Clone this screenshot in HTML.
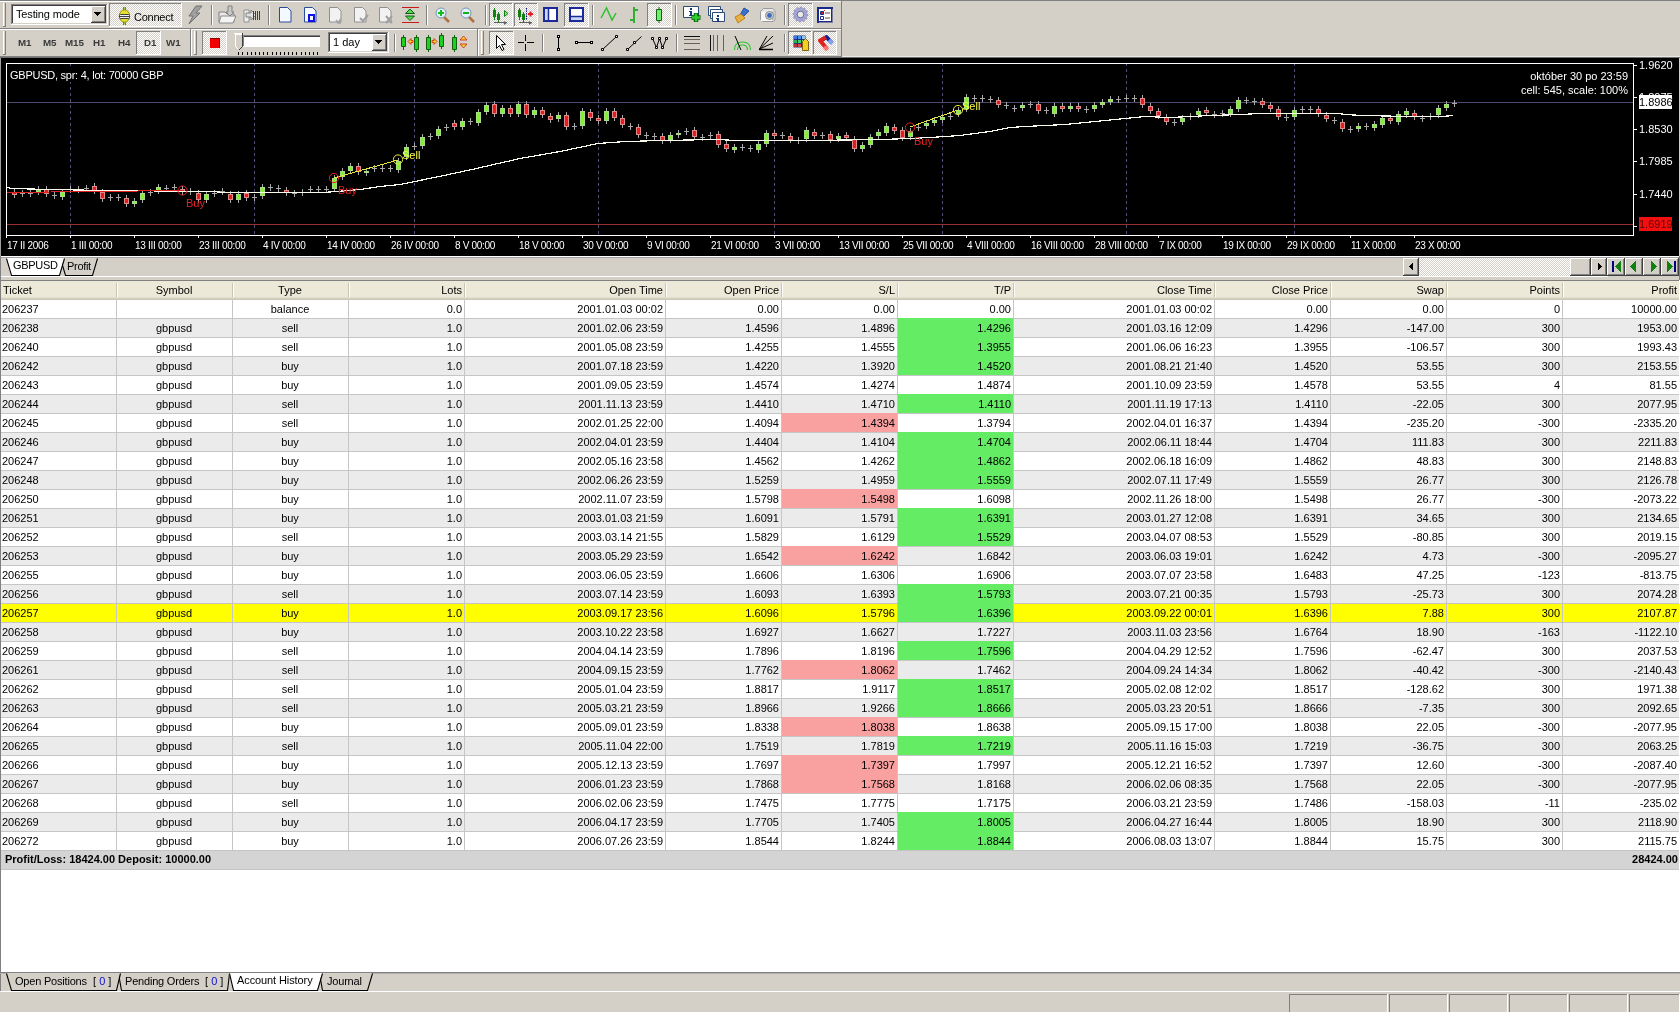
<!DOCTYPE html><html><head><meta charset="utf-8"><style>html,body{margin:0;padding:0;}
body{width:1680px;height:1012px;overflow:hidden;position:relative;background:#d4d0c8;font-family:"Liberation Sans",sans-serif;font-size:11px;color:#000;}
.a{position:absolute;}
.t{position:absolute;white-space:nowrap;line-height:13px;}
svg{position:absolute;overflow:visible;}
</style></head><body><div id="root" style="position:absolute;left:0;top:0;width:1680px;height:1012px;overflow:hidden;will-change:transform"><div class="a" style="left:0px;top:0px;width:1680px;height:1px;background:#808080;"></div><div class="a" style="left:0px;top:1px;width:841px;height:1px;background:#ffffff;"></div><div class="a" style="left:0px;top:28px;width:841px;height:1px;background:#808080;"></div><div class="a" style="left:0px;top:29px;width:841px;height:1px;background:#ffffff;"></div><div class="a" style="left:841px;top:0px;width:1px;height:57px;background:#808080;"></div><div class="a" style="left:0px;top:56px;width:842px;height:1px;background:#808080;"></div><div class="a" style="left:842px;top:56px;width:838px;height:1px;background:#ece9e4;"></div><div class="a" style="left:0px;top:57px;width:1680px;height:1px;background:#707070;"></div><div class="a" style="left:3px;top:3px;width:1px;height:24px;background:#ffffff;"></div><div class="a" style="left:5px;top:3px;width:1px;height:24px;background:#808080;"></div><div class="a" style="left:3px;top:26px;width:3px;height:1px;background:#808080;"></div><div class="a" style="left:11px;top:4px;width:97px;height:21px;background:#ffffff;"></div><div class="a" style="left:11px;top:4px;width:97px;height:1px;background:#808080;"></div><div class="a" style="left:11px;top:4px;width:1px;height:21px;background:#808080;"></div><div class="a" style="left:12px;top:5px;width:95px;height:1px;background:#404040;"></div><div class="a" style="left:12px;top:5px;width:1px;height:19px;background:#404040;"></div><div class="a" style="left:11px;top:24px;width:97px;height:1px;background:#ffffff;"></div><div class="a" style="left:107px;top:4px;width:1px;height:21px;background:#ffffff;"></div><div class="a" style="left:12px;top:23px;width:95px;height:1px;background:#d4d0c8;"></div><div class="a" style="left:106px;top:5px;width:1px;height:19px;background:#d4d0c8;"></div><div class="a" style="left:91px;top:6px;width:15px;height:17px;background:#d4d0c8;"></div><div class="a" style="left:91px;top:6px;width:15px;height:1px;background:#ffffff;"></div><div class="a" style="left:91px;top:6px;width:1px;height:17px;background:#ffffff;"></div><div class="a" style="left:91px;top:22px;width:15px;height:1px;background:#404040;"></div><div class="a" style="left:105px;top:6px;width:1px;height:17px;background:#404040;"></div><div class="a" style="left:92px;top:21px;width:13px;height:1px;background:#808080;"></div><div class="a" style="left:104px;top:7px;width:1px;height:15px;background:#808080;"></div><svg style="left:94px;top:12px" width="8" height="5" shape-rendering="crispEdges"><path d="M0 0H7V1H6V2H5V3H4V4H3V3H2V2H1V1H0Z" fill="#000"/></svg><div class="t" style="left:16px;top:8px;font-size:11px;letter-spacing:-0.15px;">Testing mode</div><div class="a" style="left:109px;top:3px;width:73px;height:24px;background-color:#d4d0c8;background-image:linear-gradient(45deg,#fff 25%,transparent 25%,transparent 75%,#fff 75%),linear-gradient(45deg,#fff 25%,transparent 25%,transparent 75%,#fff 75%);background-size:2px 2px;background-position:0 0,1px 1px;"></div><div class="a" style="left:109px;top:3px;width:73px;height:1px;background:#808080;"></div><div class="a" style="left:109px;top:3px;width:1px;height:24px;background:#808080;"></div><div class="a" style="left:109px;top:26px;width:73px;height:1px;background:#ffffff;"></div><div class="a" style="left:181px;top:3px;width:1px;height:24px;background:#ffffff;"></div><div class="t" style="left:134px;top:11px;letter-spacing:-0.25px;">Connect</div><div class="a" style="left:211px;top:5px;width:1px;height:20px;background:#808080;"></div><div class="a" style="left:212px;top:5px;width:1px;height:20px;background:#ffffff;"></div><div class="a" style="left:268px;top:5px;width:1px;height:20px;background:#808080;"></div><div class="a" style="left:269px;top:5px;width:1px;height:20px;background:#ffffff;"></div><div class="a" style="left:426px;top:5px;width:1px;height:20px;background:#808080;"></div><div class="a" style="left:427px;top:5px;width:1px;height:20px;background:#ffffff;"></div><div class="a" style="left:485px;top:5px;width:1px;height:20px;background:#808080;"></div><div class="a" style="left:486px;top:5px;width:1px;height:20px;background:#ffffff;"></div><div class="a" style="left:592px;top:5px;width:1px;height:20px;background:#808080;"></div><div class="a" style="left:593px;top:5px;width:1px;height:20px;background:#ffffff;"></div><div class="a" style="left:675px;top:5px;width:1px;height:20px;background:#808080;"></div><div class="a" style="left:676px;top:5px;width:1px;height:20px;background:#ffffff;"></div><div class="a" style="left:784px;top:5px;width:1px;height:20px;background:#808080;"></div><div class="a" style="left:785px;top:5px;width:1px;height:20px;background:#ffffff;"></div><div class="a" style="left:489px;top:3px;width:24px;height:24px;background-color:#d4d0c8;background-image:linear-gradient(45deg,#fff 25%,transparent 25%,transparent 75%,#fff 75%),linear-gradient(45deg,#fff 25%,transparent 25%,transparent 75%,#fff 75%);background-size:2px 2px;background-position:0 0,1px 1px;"></div><div class="a" style="left:489px;top:3px;width:24px;height:1px;background:#808080;"></div><div class="a" style="left:489px;top:3px;width:1px;height:24px;background:#808080;"></div><div class="a" style="left:489px;top:26px;width:24px;height:1px;background:#ffffff;"></div><div class="a" style="left:512px;top:3px;width:1px;height:24px;background:#ffffff;"></div><div class="a" style="left:514px;top:3px;width:24px;height:24px;background-color:#d4d0c8;background-image:linear-gradient(45deg,#fff 25%,transparent 25%,transparent 75%,#fff 75%),linear-gradient(45deg,#fff 25%,transparent 25%,transparent 75%,#fff 75%);background-size:2px 2px;background-position:0 0,1px 1px;"></div><div class="a" style="left:514px;top:3px;width:24px;height:1px;background:#808080;"></div><div class="a" style="left:514px;top:3px;width:1px;height:24px;background:#808080;"></div><div class="a" style="left:514px;top:26px;width:24px;height:1px;background:#ffffff;"></div><div class="a" style="left:537px;top:3px;width:1px;height:24px;background:#ffffff;"></div><div class="a" style="left:564px;top:3px;width:25px;height:24px;background-color:#d4d0c8;background-image:linear-gradient(45deg,#fff 25%,transparent 25%,transparent 75%,#fff 75%),linear-gradient(45deg,#fff 25%,transparent 25%,transparent 75%,#fff 75%);background-size:2px 2px;background-position:0 0,1px 1px;"></div><div class="a" style="left:564px;top:3px;width:25px;height:1px;background:#808080;"></div><div class="a" style="left:564px;top:3px;width:1px;height:24px;background:#808080;"></div><div class="a" style="left:564px;top:26px;width:25px;height:1px;background:#ffffff;"></div><div class="a" style="left:588px;top:3px;width:1px;height:24px;background:#ffffff;"></div><div class="a" style="left:647px;top:3px;width:25px;height:24px;background-color:#d4d0c8;background-image:linear-gradient(45deg,#fff 25%,transparent 25%,transparent 75%,#fff 75%),linear-gradient(45deg,#fff 25%,transparent 25%,transparent 75%,#fff 75%);background-size:2px 2px;background-position:0 0,1px 1px;"></div><div class="a" style="left:647px;top:3px;width:25px;height:1px;background:#808080;"></div><div class="a" style="left:647px;top:3px;width:1px;height:24px;background:#808080;"></div><div class="a" style="left:647px;top:26px;width:25px;height:1px;background:#ffffff;"></div><div class="a" style="left:671px;top:3px;width:1px;height:24px;background:#ffffff;"></div><div class="a" style="left:788px;top:3px;width:25px;height:24px;background-color:#d4d0c8;background-image:linear-gradient(45deg,#fff 25%,transparent 25%,transparent 75%,#fff 75%),linear-gradient(45deg,#fff 25%,transparent 25%,transparent 75%,#fff 75%);background-size:2px 2px;background-position:0 0,1px 1px;"></div><div class="a" style="left:788px;top:3px;width:25px;height:1px;background:#808080;"></div><div class="a" style="left:788px;top:3px;width:1px;height:24px;background:#808080;"></div><div class="a" style="left:788px;top:26px;width:25px;height:1px;background:#ffffff;"></div><div class="a" style="left:812px;top:3px;width:1px;height:24px;background:#ffffff;"></div><div class="a" style="left:3px;top:31px;width:1px;height:24px;background:#ffffff;"></div><div class="a" style="left:5px;top:31px;width:1px;height:24px;background:#808080;"></div><div class="a" style="left:3px;top:54px;width:3px;height:1px;background:#808080;"></div><div class="a" style="left:136px;top:31px;width:25px;height:24px;background-color:#d4d0c8;background-image:linear-gradient(45deg,#fff 25%,transparent 25%,transparent 75%,#fff 75%),linear-gradient(45deg,#fff 25%,transparent 25%,transparent 75%,#fff 75%);background-size:2px 2px;background-position:0 0,1px 1px;"></div><div class="a" style="left:136px;top:31px;width:25px;height:1px;background:#808080;"></div><div class="a" style="left:136px;top:31px;width:1px;height:24px;background:#808080;"></div><div class="a" style="left:136px;top:54px;width:25px;height:1px;background:#ffffff;"></div><div class="a" style="left:160px;top:31px;width:1px;height:24px;background:#ffffff;"></div><div class="t" style="left:18px;top:36px;font-size:9.8px;font-weight:bold;color:#3a3a3a;letter-spacing:-0.1px;">M1</div><div class="t" style="left:43px;top:36px;font-size:9.8px;font-weight:bold;color:#3a3a3a;letter-spacing:-0.1px;">M5</div><div class="t" style="left:65px;top:36px;font-size:9.8px;font-weight:bold;color:#3a3a3a;letter-spacing:-0.1px;">M15</div><div class="t" style="left:93px;top:36px;font-size:9.8px;font-weight:bold;color:#3a3a3a;letter-spacing:-0.1px;">H1</div><div class="t" style="left:118px;top:36px;font-size:9.8px;font-weight:bold;color:#3a3a3a;letter-spacing:-0.1px;">H4</div><div class="t" style="left:144px;top:36px;font-size:9.8px;font-weight:bold;color:#3a3a3a;letter-spacing:-0.1px;">D1</div><div class="t" style="left:166px;top:36px;font-size:9.8px;font-weight:bold;color:#3a3a3a;letter-spacing:-0.1px;">W1</div><div class="a" style="left:190px;top:29px;width:1px;height:27px;background:#808080;"></div><div class="a" style="left:191px;top:29px;width:1px;height:27px;background:#ffffff;"></div><div class="a" style="left:194px;top:31px;width:1px;height:24px;background:#ffffff;"></div><div class="a" style="left:196px;top:31px;width:1px;height:24px;background:#808080;"></div><div class="a" style="left:194px;top:54px;width:3px;height:1px;background:#808080;"></div><div class="a" style="left:202px;top:31px;width:25px;height:24px;background-color:#d4d0c8;background-image:linear-gradient(45deg,#fff 25%,transparent 25%,transparent 75%,#fff 75%),linear-gradient(45deg,#fff 25%,transparent 25%,transparent 75%,#fff 75%);background-size:2px 2px;background-position:0 0,1px 1px;"></div><div class="a" style="left:202px;top:31px;width:25px;height:1px;background:#808080;"></div><div class="a" style="left:202px;top:31px;width:1px;height:24px;background:#808080;"></div><div class="a" style="left:202px;top:54px;width:25px;height:1px;background:#ffffff;"></div><div class="a" style="left:226px;top:31px;width:1px;height:24px;background:#ffffff;"></div><div class="a" style="left:210px;top:38px;width:10px;height:10px;background:#f00000;"></div><div class="a" style="left:210px;top:38px;width:10px;height:1px;background:#900000;"></div><div class="a" style="left:219px;top:38px;width:1px;height:10px;background:#900000;"></div><div class="a" style="left:243px;top:35px;width:78px;height:12px;background:#ffffff;"></div><div class="a" style="left:243px;top:35px;width:78px;height:1px;background:#808080;"></div><div class="a" style="left:243px;top:36px;width:77px;height:1px;background:#404040;"></div><div class="a" style="left:243px;top:35px;width:1px;height:12px;background:#808080;"></div><div class="a" style="left:243px;top:46px;width:78px;height:1px;background:#ffffff;"></div><div class="a" style="left:320px;top:35px;width:1px;height:12px;background:#d4d0c8;"></div><svg style="left:233px;top:33px" width="12" height="19" shape-rendering="crispEdges"><path d="M1 0H9V13L5 17H5L1 13Z" fill="#d4d0c8"/><path d="M1 0H9V1H2V13L5 16" fill="none" stroke="#ffffff" stroke-width="1"/><path d="M9.5 0V13.5L5.5 17.5" fill="none" stroke="#404040" stroke-width="1"/></svg><div class="a" style="left:238px;top:52px;width:1px;height:3px;background:#000000;"></div><div class="a" style="left:242px;top:52px;width:1px;height:3px;background:#000000;"></div><div class="a" style="left:247px;top:52px;width:1px;height:3px;background:#000000;"></div><div class="a" style="left:251px;top:52px;width:1px;height:3px;background:#000000;"></div><div class="a" style="left:255px;top:52px;width:1px;height:3px;background:#000000;"></div><div class="a" style="left:259px;top:52px;width:1px;height:3px;background:#000000;"></div><div class="a" style="left:263px;top:52px;width:1px;height:3px;background:#000000;"></div><div class="a" style="left:267px;top:52px;width:1px;height:3px;background:#000000;"></div><div class="a" style="left:272px;top:52px;width:1px;height:3px;background:#000000;"></div><div class="a" style="left:276px;top:52px;width:1px;height:3px;background:#000000;"></div><div class="a" style="left:280px;top:52px;width:1px;height:3px;background:#000000;"></div><div class="a" style="left:284px;top:52px;width:1px;height:3px;background:#000000;"></div><div class="a" style="left:288px;top:52px;width:1px;height:3px;background:#000000;"></div><div class="a" style="left:292px;top:52px;width:1px;height:3px;background:#000000;"></div><div class="a" style="left:296px;top:52px;width:1px;height:3px;background:#000000;"></div><div class="a" style="left:301px;top:52px;width:1px;height:3px;background:#000000;"></div><div class="a" style="left:305px;top:52px;width:1px;height:3px;background:#000000;"></div><div class="a" style="left:309px;top:52px;width:1px;height:3px;background:#000000;"></div><div class="a" style="left:313px;top:52px;width:1px;height:3px;background:#000000;"></div><div class="a" style="left:317px;top:52px;width:1px;height:3px;background:#000000;"></div><div class="a" style="left:328px;top:32px;width:61px;height:21px;background:#ffffff;"></div><div class="a" style="left:328px;top:32px;width:61px;height:1px;background:#808080;"></div><div class="a" style="left:328px;top:32px;width:1px;height:21px;background:#808080;"></div><div class="a" style="left:329px;top:33px;width:59px;height:1px;background:#404040;"></div><div class="a" style="left:329px;top:33px;width:1px;height:19px;background:#404040;"></div><div class="a" style="left:328px;top:52px;width:61px;height:1px;background:#ffffff;"></div><div class="a" style="left:388px;top:32px;width:1px;height:21px;background:#ffffff;"></div><div class="a" style="left:329px;top:51px;width:59px;height:1px;background:#d4d0c8;"></div><div class="a" style="left:387px;top:33px;width:1px;height:19px;background:#d4d0c8;"></div><div class="a" style="left:372px;top:34px;width:15px;height:17px;background:#d4d0c8;"></div><div class="a" style="left:372px;top:34px;width:15px;height:1px;background:#ffffff;"></div><div class="a" style="left:372px;top:34px;width:1px;height:17px;background:#ffffff;"></div><div class="a" style="left:372px;top:50px;width:15px;height:1px;background:#404040;"></div><div class="a" style="left:386px;top:34px;width:1px;height:17px;background:#404040;"></div><div class="a" style="left:373px;top:49px;width:13px;height:1px;background:#808080;"></div><div class="a" style="left:385px;top:35px;width:1px;height:15px;background:#808080;"></div><svg style="left:375px;top:40px" width="8" height="5" shape-rendering="crispEdges"><path d="M0 0H7V1H6V2H5V3H4V4H3V3H2V2H1V1H0Z" fill="#000"/></svg><div class="t" style="left:333px;top:36px;">1 day</div><div class="a" style="left:394px;top:34px;width:1px;height:18px;background:#808080;"></div><div class="a" style="left:395px;top:34px;width:1px;height:18px;background:#ffffff;"></div><div class="a" style="left:477px;top:29px;width:1px;height:27px;background:#808080;"></div><div class="a" style="left:478px;top:29px;width:1px;height:27px;background:#ffffff;"></div><div class="a" style="left:481px;top:31px;width:1px;height:24px;background:#ffffff;"></div><div class="a" style="left:483px;top:31px;width:1px;height:24px;background:#808080;"></div><div class="a" style="left:481px;top:54px;width:3px;height:1px;background:#808080;"></div><div class="a" style="left:489px;top:31px;width:25px;height:24px;background-color:#d4d0c8;background-image:linear-gradient(45deg,#fff 25%,transparent 25%,transparent 75%,#fff 75%),linear-gradient(45deg,#fff 25%,transparent 25%,transparent 75%,#fff 75%);background-size:2px 2px;background-position:0 0,1px 1px;"></div><div class="a" style="left:489px;top:31px;width:25px;height:1px;background:#808080;"></div><div class="a" style="left:489px;top:31px;width:1px;height:24px;background:#808080;"></div><div class="a" style="left:489px;top:54px;width:25px;height:1px;background:#ffffff;"></div><div class="a" style="left:513px;top:31px;width:1px;height:24px;background:#ffffff;"></div><div class="a" style="left:542px;top:34px;width:1px;height:18px;background:#808080;"></div><div class="a" style="left:543px;top:34px;width:1px;height:18px;background:#ffffff;"></div><div class="a" style="left:676px;top:34px;width:1px;height:18px;background:#808080;"></div><div class="a" style="left:677px;top:34px;width:1px;height:18px;background:#ffffff;"></div><div class="a" style="left:784px;top:34px;width:1px;height:18px;background:#808080;"></div><div class="a" style="left:785px;top:34px;width:1px;height:18px;background:#ffffff;"></div><div class="a" style="left:788px;top:31px;width:24px;height:24px;background-color:#d4d0c8;background-image:linear-gradient(45deg,#fff 25%,transparent 25%,transparent 75%,#fff 75%),linear-gradient(45deg,#fff 25%,transparent 25%,transparent 75%,#fff 75%);background-size:2px 2px;background-position:0 0,1px 1px;"></div><div class="a" style="left:788px;top:31px;width:24px;height:1px;background:#808080;"></div><div class="a" style="left:788px;top:31px;width:1px;height:24px;background:#808080;"></div><div class="a" style="left:788px;top:54px;width:24px;height:1px;background:#ffffff;"></div><div class="a" style="left:811px;top:31px;width:1px;height:24px;background:#ffffff;"></div><div class="a" style="left:813px;top:31px;width:24px;height:24px;background-color:#d4d0c8;background-image:linear-gradient(45deg,#fff 25%,transparent 25%,transparent 75%,#fff 75%),linear-gradient(45deg,#fff 25%,transparent 25%,transparent 75%,#fff 75%);background-size:2px 2px;background-position:0 0,1px 1px;"></div><div class="a" style="left:813px;top:31px;width:24px;height:1px;background:#808080;"></div><div class="a" style="left:813px;top:31px;width:1px;height:24px;background:#808080;"></div><div class="a" style="left:813px;top:54px;width:24px;height:1px;background:#ffffff;"></div><div class="a" style="left:836px;top:31px;width:1px;height:24px;background:#ffffff;"></div><svg style="left:0;top:0" width="842" height="57"><g shape-rendering="crispEdges"><path d="M123 7h1v3h-1zM125 7h1v3h-1zM123 22h1v3h-1zM125 22h1v3h-1z" fill="#6a8a20" stroke="none" stroke-width="1" /><path d="M124 7h1v3h-1zM124 22h1v3h-1z" fill="#a8c860" stroke="none" stroke-width="1" /></g><ellipse cx="124.5" cy="16" rx="5.2" ry="6.2" fill="#e8e030" stroke="#8c8c10" stroke-width="1"/><rect x="119.5" y="14.5" width="10" height="4" rx="1" fill="#f0f0f0" stroke="#404040" stroke-width="1"/><line x1="119.5" y1="16.5" x2="129.5" y2="16.5" stroke="#404040" stroke-width="1"/><path d="M196 6 L202 6 L196 13 L200 13 L189 24 L193 16 L189 16 Z" fill="#a0a0a0" stroke="#707070" stroke-width="1" /><path d="M219 12 h6 l2 2 h7 v8 h-15 z" fill="#e8e8e8" stroke="#808080" stroke-width="1" /><path d="M221 16 h15 l-3 7 h-14 z" fill="#f4f4f4" stroke="#8a8a8a" stroke-width="1" /><path d="M228 6 v6 h-2 l4 4 l4 -4 h-2 v-6 z" fill="#c8c8c8" stroke="#808080" stroke-width="1" /><path d="M244 10 h5 v12 h-5 z" fill="#eeeeee" stroke="#909090" stroke-width="1" /><path d="M246 13 h5 v-3 l5 5 l-5 5 v-3 h-5 z" fill="#e0e0e0" stroke="#808080" stroke-width="1" /><path d="M253.5 11v9M255.5 11v9M257.5 11v9M259.5 11v9" fill="none" stroke="#404040" stroke-width="1" /><path d="M279.5 7.5 h8 l3.5 3.5 v11 h-11.5 z" fill="#f4f8ff" stroke="#2a4a9a" stroke-width="1" /><path d="M304.5 7.5 h8 l3.5 3.5 v11 h-11.5 z" fill="#f4f8ff" stroke="#2a4a9a" stroke-width="1" /><path d="M329.5 7.5 h8 l3.5 3.5 v11 h-11.5 z" fill="#f2f2f2" stroke="#909090" stroke-width="1" /><path d="M354.5 7.5 h8 l3.5 3.5 v11 h-11.5 z" fill="#f2f2f2" stroke="#909090" stroke-width="1" /><path d="M379.5 7.5 h8 l3.5 3.5 v11 h-11.5 z" fill="#f2f2f2" stroke="#909090" stroke-width="1" /><path d="M309 15h5v6h-5z" fill="none" stroke="#1010e0" stroke-width="2" /><path d="M336 20 l2 3 l2 -3 v4" fill="none" stroke="#a0a0a0" stroke-width="1.5" /><path d="M360 18 l3 3 l5 -6" fill="none" stroke="#a0a0a0" stroke-width="2" /><path d="M386 16 l6 7 M392 16 l-6 7" fill="none" stroke="#a0a0a0" stroke-width="2" /><g shape-rendering="crispEdges"><path d="M402 7h17v1h-17zM402 22h17v1h-17z" fill="#c81818" stroke="none" stroke-width="1" /></g><path d="M410 9 L414.5 13.5 H405.5 Z" fill="#50d850" stroke="#106010" stroke-width="1" /><path d="M405.5 16 H414.5 L410 20.5 Z" fill="#50d850" stroke="#106010" stroke-width="1" /><path d="M444 17 l5 5" fill="none" stroke="#b07040" stroke-width="2.5" /><circle cx="441" cy="13" r="5" fill="#e0f0ff" stroke="#7890b0" stroke-width="1"/><path d="M438 13h6M441 10v6" fill="none" stroke="#10c010" stroke-width="2" /><path d="M469 17 l5 5" fill="none" stroke="#b07040" stroke-width="2.5" /><circle cx="466" cy="13" r="5" fill="#e0f0ff" stroke="#7890b0" stroke-width="1"/><path d="M463 13h6" fill="none" stroke="#10b010" stroke-width="2" /><g shape-rendering="crispEdges"><path d="M494 8h1v12h-1zM493 10h3v7h-3zM498 12h1v10h-1zM497 14h3v6h-3z" fill="#108010" stroke="none" stroke-width="1" /><path d="M494 22h13v1h-13z" fill="#606060" stroke="none" stroke-width="1" /><path d="M519 8h1v12h-1zM518 10h3v7h-3zM523 12h1v10h-1zM522 14h3v6h-3z" fill="#108010" stroke="none" stroke-width="1" /><path d="M519 22h13v1h-13z" fill="#606060" stroke="none" stroke-width="1" /></g><path d="M507 23 l-3 -2 v4 z" fill="#606060" stroke="none" stroke-width="1" /><path d="M504.5 10.5 v6 l3.5 -3 z" fill="#80e080" stroke="#108010" stroke-width="1" /><path d="M532 23 l-3 -2 v4 z" fill="#606060" stroke="none" stroke-width="1" /><path d="M526.5 8 v12" fill="none" stroke="#101080" stroke-width="1" stroke-dasharray="1.5 1"/><path d="M528 14 l5 0 M530.5 11.5 v5" fill="none" stroke="#e02020" stroke-width="2" /><path d="M544 8h13v13h-13z" fill="#ffffff" stroke="#1a2a9a" stroke-width="2" /><path d="M545 9h3v11h-3z" fill="#c8d8f0" stroke="none" stroke-width="1" /><path d="M548.5 8v13" fill="none" stroke="#1a2a9a" stroke-width="1.5" /><path d="M570 8h13v13h-13z" fill="#ffffff" stroke="#1a2a9a" stroke-width="2" /><path d="M571 17h11v3h-11z" fill="#c8d8f0" stroke="none" stroke-width="1" /><path d="M570 16.5h13" fill="none" stroke="#1a2a9a" stroke-width="1.5" /><path d="M601 18 L606.5 8 L612 20 L616 13" fill="none" stroke="#30c030" stroke-width="1.5" /><path d="M634 7v16M630 20h4M634 10h4" fill="none" stroke="#30b030" stroke-width="2" /><path d="M659 7v16" fill="none" stroke="#106010" stroke-width="1" /><path d="M656.5 9.5h5v11h-5z" fill="#70ee70" stroke="#106010" stroke-width="1" /><path d="M683.5 6.5h15v11h-15z" fill="#ffffff" stroke="#2a4a7a" stroke-width="1" /><g shape-rendering="crispEdges"><path d="M690 8h2v2h-2zM689 11h3v4h1v1h-4v-1h1v-3h-1z" fill="#1a3a7a" stroke="none" stroke-width="1" /></g><path d="M696 13v9M691.5 17.5h9" fill="none" stroke="#006000" stroke-width="4.5" /><path d="M696 13.5v8M692 17.5h8" fill="none" stroke="#30d030" stroke-width="2.5" /><path d="M708.5 6.5h12v9h-12z" fill="#ffffff" stroke="#2a4a7a" stroke-width="1" /><path d="M710.5 9.5h12v9h-12z" fill="#ffffff" stroke="#2a4a7a" stroke-width="1" /><path d="M712.5 12.5h12v9h-12z" fill="#ffffff" stroke="#2a4a7a" stroke-width="1" /><g shape-rendering="crispEdges"><path d="M717 15h2v2h-2zM716 18h3v3h1v1h-4v-1h1v-2h-1z" fill="#1a3a7a" stroke="none" stroke-width="1" /></g><path d="M744 8 L749 11 L743 17 L740 15 Z" fill="#3a70d0" stroke="#2050a0" stroke-width="1" /><path d="M735 17 L741 14 L745 18 L738 23 Z" fill="#e8b040" stroke="#c08020" stroke-width="1" /><path d="M760.5 11.5 l3 -3 h9 l2.5 2 v9.5 l-2 1.5 h-10 l-2.5 -2 z" fill="#e8e8e8" stroke="#9a9a9a" stroke-width="1" /><path d="M761 12 h11 v9 h-11 z" fill="#f8f8f8" stroke="none" stroke-width="1" /><path d="M772 11 l3 -1 v9 l-3 2 z" fill="#c8c8c8" stroke="none" stroke-width="1" /><circle cx="769.5" cy="15.5" r="4" fill="#d0d0d0" stroke="#8a8a8a" stroke-width="1"/><circle cx="769.5" cy="15.5" r="2.4" fill="#3a6cc0"/><polygon points="808.10,14.50 808.03,15.49 806.49,16.10 806.23,16.87 807.08,18.30 806.53,19.13 804.88,18.88 804.27,19.42 804.30,21.08 803.41,21.52 802.10,20.49 801.31,20.65 800.50,22.10 799.51,22.03 798.90,20.49 798.13,20.23 796.70,21.08 795.87,20.53 796.12,18.88 795.58,18.27 793.92,18.30 793.48,17.41 794.51,16.10 794.35,15.31 792.90,14.50 792.97,13.51 794.51,12.90 794.77,12.13 793.92,10.70 794.47,9.87 796.12,10.12 796.73,9.58 796.70,7.92 797.59,7.48 798.90,8.51 799.69,8.35 800.50,6.90 801.49,6.97 802.10,8.51 802.87,8.77 804.30,7.92 805.13,8.47 804.88,10.12 805.42,10.73 807.08,10.70 807.52,11.59 806.49,12.90 806.65,13.69" fill="#a4a4d4" stroke="#8080b0" stroke-width="0.6"/><circle cx="800.5" cy="14.5" r="3.3" fill="#eceae6" stroke="#6a6a98" stroke-width="1"/><path d="M818 8h14v14h-14z" fill="#ffffff" stroke="#1a2a8a" stroke-width="2" /><path d="M819 22.5h14M832.5 9v14" fill="none" stroke="#8080a0" stroke-width="1" /><path d="M820.5 11.5h3v3h-3zM820.5 16.5h3v3h-3z" fill="none" stroke="#1a2a8a" stroke-width="1" /><path d="M821 12h2v2h-2z" fill="#c02020" stroke="none" stroke-width="1" /><path d="M822 13 l3 -3" fill="none" stroke="#d02020" stroke-width="1" /><path d="M825 13h5M825 18h5" fill="none" stroke="#8a8a8a" stroke-width="1.5" /><path d="M403.5 35V50" fill="none" stroke="#106010" stroke-width="1" /><path d="M401.5 37.5h4v9h-4z" fill="#20d020" stroke="#106010" stroke-width="1" /><path d="M416.5 35V52" fill="none" stroke="#106010" stroke-width="1" /><path d="M414.5 37.5h4v12h-4z" fill="#20d020" stroke="#106010" stroke-width="1" /><path d="M408 41.5 l3 -3 v2 h2 v2 h-2 v2 z" fill="#f0d020" stroke="#d02020" stroke-width="0.8" /><path d="M428.5 35V52" fill="none" stroke="#106010" stroke-width="1" /><path d="M426.5 37.5h4v12h-4z" fill="#20d020" stroke="#106010" stroke-width="1" /><path d="M441.5 33V49" fill="none" stroke="#106010" stroke-width="1" /><path d="M439.5 35.5h4v11h-4z" fill="#20d020" stroke="#106010" stroke-width="1" /><path d="M437 41.5 l-3 -3 v2 h-2 v2 h2 v2 z" fill="#f0d020" stroke="#d02020" stroke-width="0.8" /><path d="M454.5 35V52" fill="none" stroke="#106010" stroke-width="1" /><path d="M452.5 37.5h4v12h-4z" fill="#20d020" stroke="#106010" stroke-width="1" /><path d="M463.5 36 l3.5 4 h-7 z M463.5 48 l3.5 -4 h-7 z" fill="#f0d020" stroke="#d02020" stroke-width="0.8" /><path d="M496.5 35.5 v13 l3 -3 l2.5 5 l2 -1 l-2.5 -5 h4 z" fill="#ffffff" stroke="#000000" stroke-width="1" /><g shape-rendering="crispEdges"><path d="M518 42h16v1h-16zM525 35h1v16h-1z" fill="#000" stroke="none" stroke-width="1" /><path d="M524 42h3v1h-3z" fill="#d4d0c8" stroke="none" stroke-width="1" /><path d="M525 41h1v3h-1z" fill="#d4d0c8" stroke="none" stroke-width="1" /><path d="M558 36h1v14h-1z" fill="#000" stroke="none" stroke-width="1" /><path d="M557 35h3v3h-3zM557 48h3v3h-3z" fill="#000" stroke="none" stroke-width="1" /><path d="M558 36h1v1h-1zM558 49h1v1h-1z" fill="#fff" stroke="none" stroke-width="1" /><path d="M577 42h14v1h-14z" fill="#000" stroke="none" stroke-width="1" /><path d="M575 41h3v3h-3zM590 41h3v3h-3z" fill="#000" stroke="none" stroke-width="1" /><path d="M576 42h1v1h-1zM591 42h1v1h-1z" fill="#fff" stroke="none" stroke-width="1" /><path d="M684 36h16v1h-16z" fill="#101010" stroke="none" stroke-width="1" /><path d="M684 39h16v1h-16zM684 43h16v1h-16zM684 49h16v1h-16z" fill="#6a6058" stroke="none" stroke-width="1" /><path d="M710 35h1v16h-1z" fill="#101010" stroke="none" stroke-width="1" /><path d="M713 35h1v16h-1zM717 35h1v16h-1zM723 35h1v16h-1z" fill="#6a6058" stroke="none" stroke-width="1" /></g><path d="M602.5 49.5 L616.5 36.5" fill="none" stroke="#000" stroke-width="1" /><path d="M601.5 48.5h2v2h-2zM615.5 35.5h2v2h-2z" fill="#fff" stroke="#000" stroke-width="1" /><path d="M627.5 49.5 L641.5 36.5" fill="none" stroke="#000" stroke-width="1" /><path d="M626.5 48.5h2v2h-2zM633.5 41.5h2v2h-2z" fill="#fff" stroke="#000" stroke-width="1" /><path d="M652.5 38.5 L656.5 47.5 L659.5 38.5 L662.5 47.5 L666.5 38.5" fill="none" stroke="#000" stroke-width="1" /><path d="M651.5 37.5h2v2h-2zM658.5 37.5h2v2h-2zM665.5 37.5h2v2h-2zM655.5 46.5h2v2h-2zM661.5 46.5h2v2h-2z" fill="#fff" stroke="#000" stroke-width="1" /><path d="M734.5 50 Q734.5 42 742.5 42 Q750.5 42 750.5 50" fill="none" stroke="#30c030" stroke-width="1.2" /><path d="M737.5 50 Q737.5 45 742.5 45 Q747.5 45 747.5 50" fill="none" stroke="#30c030" stroke-width="1.2" /><path d="M735 36 L741 50" fill="none" stroke="#000" stroke-width="1" /><path d="M759 49.5 H773" fill="none" stroke="#000" stroke-width="1.5" /><path d="M759.5 49 L773 36 M759.5 49 L767 36 M759.5 49 L773 43" fill="none" stroke="#000" stroke-width="1" /><path d="M793.5 35.5h12v12h-12z" fill="#20307a" stroke="none" stroke-width="1" /><g shape-rendering="crispEdges"><path d="M794 36h3v3h-3z" fill="#3a7ae0" stroke="none" stroke-width="1" /><path d="M798 36h3v3h-3z" fill="#4a90f0" stroke="none" stroke-width="1" /><path d="M802 36h3v3h-3z" fill="#8ac8f8" stroke="none" stroke-width="1" /><path d="M794 40h3v3h-3z" fill="#30b050" stroke="none" stroke-width="1" /><path d="M798 40h3v3h-3z" fill="#40d070" stroke="none" stroke-width="1" /><path d="M802 40h3v3h-3z" fill="#60e090" stroke="none" stroke-width="1" /><path d="M794 44h3v3h-3z" fill="#c03030" stroke="none" stroke-width="1" /><path d="M798 44h3v3h-3z" fill="#d04848" stroke="none" stroke-width="1" /><path d="M802 44h3v3h-3z" fill="#e06060" stroke="none" stroke-width="1" /></g><path d="M802.5 41.5 l3 -3 l3 3 v9 h-6 z" fill="#f0d020" stroke="#806010" stroke-width="1" /><path d="M821 40.5 L826.5 37 L832 43" fill="none" stroke="#102090" stroke-width="4" stroke-linejoin="round"/><path d="M829 40 L832.5 43.5" fill="none" stroke="#80a0f0" stroke-width="4" /><path d="M826 37.5 L820 40.5 L827 49" fill="none" stroke="#e02020" stroke-width="4" stroke-linejoin="round"/><path d="M824.5 46.5 L827.5 50" fill="none" stroke="#ff7070" stroke-width="4" /></svg><div class="a" style="left:0px;top:58px;width:1680px;height:198px;background:#000000;"></div><div class="a" style="left:0px;top:58px;width:1px;height:198px;background:#a0a0a0;"></div><div class="a" style="left:1679px;top:58px;width:1px;height:198px;background:#d4d0c8;"></div><svg style="left:0;top:0" width="1680" height="260" shape-rendering="crispEdges"><line x1="70.5" y1="63" x2="70.5" y2="235" stroke="#50507a" stroke-width="1" stroke-dasharray="3 3"/><line x1="254.5" y1="63" x2="254.5" y2="235" stroke="#50507a" stroke-width="1" stroke-dasharray="3 3"/><line x1="414.5" y1="63" x2="414.5" y2="235" stroke="#50507a" stroke-width="1" stroke-dasharray="3 3"/><line x1="598.5" y1="63" x2="598.5" y2="235" stroke="#50507a" stroke-width="1" stroke-dasharray="3 3"/><line x1="774.5" y1="63" x2="774.5" y2="235" stroke="#50507a" stroke-width="1" stroke-dasharray="3 3"/><line x1="942.5" y1="63" x2="942.5" y2="235" stroke="#50507a" stroke-width="1" stroke-dasharray="3 3"/><line x1="1126.5" y1="63" x2="1126.5" y2="235" stroke="#50507a" stroke-width="1" stroke-dasharray="3 3"/><line x1="1294.5" y1="63" x2="1294.5" y2="235" stroke="#50507a" stroke-width="1" stroke-dasharray="3 3"/><rect x="7" y="102" width="1626" height="1" fill="#4c4870"/><rect x="7" y="224" width="1626" height="1" fill="#983030"/><rect x="6" y="63" width="1628" height="1" fill="#ffffff"/><rect x="6" y="235" width="1628" height="1" fill="#ffffff"/><rect x="6" y="63" width="1" height="173" fill="#ffffff"/><rect x="1633" y="63" width="1" height="173" fill="#ffffff"/><rect x="6" y="236" width="1" height="2" fill="#ffffff"/><rect x="70" y="236" width="1" height="2" fill="#ffffff"/><rect x="134" y="236" width="1" height="2" fill="#ffffff"/><rect x="198" y="236" width="1" height="2" fill="#ffffff"/><rect x="262" y="236" width="1" height="2" fill="#ffffff"/><rect x="326" y="236" width="1" height="2" fill="#ffffff"/><rect x="390" y="236" width="1" height="2" fill="#ffffff"/><rect x="454" y="236" width="1" height="2" fill="#ffffff"/><rect x="518" y="236" width="1" height="2" fill="#ffffff"/><rect x="582" y="236" width="1" height="2" fill="#ffffff"/><rect x="646" y="236" width="1" height="2" fill="#ffffff"/><rect x="710" y="236" width="1" height="2" fill="#ffffff"/><rect x="774" y="236" width="1" height="2" fill="#ffffff"/><rect x="838" y="236" width="1" height="2" fill="#ffffff"/><rect x="902" y="236" width="1" height="2" fill="#ffffff"/><rect x="966" y="236" width="1" height="2" fill="#ffffff"/><rect x="1030" y="236" width="1" height="2" fill="#ffffff"/><rect x="1094" y="236" width="1" height="2" fill="#ffffff"/><rect x="1158" y="236" width="1" height="2" fill="#ffffff"/><rect x="1222" y="236" width="1" height="2" fill="#ffffff"/><rect x="1286" y="236" width="1" height="2" fill="#ffffff"/><rect x="1350" y="236" width="1" height="2" fill="#ffffff"/><rect x="1414" y="236" width="1" height="2" fill="#ffffff"/><rect x="1634" y="65" width="3" height="1" fill="#ffffff"/><rect x="1634" y="97" width="3" height="1" fill="#ffffff"/><rect x="1634" y="129" width="3" height="1" fill="#ffffff"/><rect x="1634" y="161" width="3" height="1" fill="#ffffff"/><rect x="1634" y="194" width="3" height="1" fill="#ffffff"/><rect x="1634" y="226" width="3" height="1" fill="#ffffff"/><rect x="14" y="189" width="1" height="9" fill="#a8a8a8"/><rect x="12" y="192" width="5" height="3" fill="#dc8a8a"/><rect x="13" y="193" width="3" height="1" fill="#e81c1c"/><rect x="22" y="190" width="1" height="7" fill="#a8a8a8"/><rect x="20" y="193" width="5" height="1" fill="#a8a8a8"/><rect x="30" y="190" width="1" height="7" fill="#a8a8a8"/><rect x="28" y="193" width="5" height="1" fill="#a8a8a8"/><rect x="38" y="186" width="1" height="9" fill="#a8a8a8"/><rect x="36" y="189" width="5" height="3" fill="#a8dc88"/><rect x="37" y="190" width="3" height="1" fill="#80f428"/><rect x="46" y="186" width="1" height="11" fill="#a8a8a8"/><rect x="44" y="189" width="5" height="5" fill="#dc8a8a"/><rect x="45" y="190" width="3" height="3" fill="#e81c1c"/><rect x="54" y="192" width="1" height="7" fill="#a8a8a8"/><rect x="52" y="195" width="5" height="1" fill="#a8a8a8"/><rect x="62" y="189" width="1" height="11" fill="#a8a8a8"/><rect x="60" y="192" width="5" height="5" fill="#a8dc88"/><rect x="61" y="193" width="3" height="3" fill="#80f428"/><rect x="70" y="186" width="1" height="7" fill="#a8a8a8"/><rect x="68" y="189" width="5" height="1" fill="#a8a8a8"/><rect x="78" y="186" width="1" height="7" fill="#a8a8a8"/><rect x="76" y="189" width="5" height="1" fill="#a8a8a8"/><rect x="86" y="185" width="1" height="7" fill="#a8a8a8"/><rect x="84" y="188" width="5" height="1" fill="#a8a8a8"/><rect x="94" y="183" width="1" height="11" fill="#a8a8a8"/><rect x="92" y="186" width="5" height="5" fill="#dc8a8a"/><rect x="93" y="187" width="3" height="3" fill="#e81c1c"/><rect x="102" y="189" width="1" height="13" fill="#a8a8a8"/><rect x="100" y="192" width="5" height="7" fill="#dc8a8a"/><rect x="101" y="193" width="3" height="5" fill="#e81c1c"/><rect x="110" y="194" width="1" height="7" fill="#a8a8a8"/><rect x="108" y="197" width="5" height="1" fill="#a8a8a8"/><rect x="118" y="194" width="1" height="7" fill="#a8a8a8"/><rect x="116" y="197" width="5" height="1" fill="#a8a8a8"/><rect x="126" y="195" width="1" height="12" fill="#a8a8a8"/><rect x="124" y="198" width="5" height="6" fill="#dc8a8a"/><rect x="125" y="199" width="3" height="4" fill="#e81c1c"/><rect x="134" y="198" width="1" height="9" fill="#a8a8a8"/><rect x="132" y="201" width="5" height="3" fill="#a8dc88"/><rect x="133" y="202" width="3" height="1" fill="#80f428"/><rect x="142" y="190" width="1" height="13" fill="#a8a8a8"/><rect x="140" y="193" width="5" height="7" fill="#a8dc88"/><rect x="141" y="194" width="3" height="5" fill="#80f428"/><rect x="150" y="189" width="1" height="7" fill="#a8a8a8"/><rect x="148" y="192" width="5" height="1" fill="#a8a8a8"/><rect x="158" y="184" width="1" height="10" fill="#a8a8a8"/><rect x="156" y="187" width="5" height="4" fill="#a8dc88"/><rect x="157" y="188" width="3" height="2" fill="#80f428"/><rect x="166" y="185" width="1" height="7" fill="#a8a8a8"/><rect x="164" y="188" width="5" height="1" fill="#a8a8a8"/><rect x="174" y="184" width="1" height="7" fill="#a8a8a8"/><rect x="172" y="187" width="5" height="1" fill="#a8a8a8"/><rect x="182" y="186" width="1" height="9" fill="#a8a8a8"/><rect x="180" y="189" width="5" height="3" fill="#dc8a8a"/><rect x="181" y="190" width="3" height="1" fill="#e81c1c"/><rect x="190" y="188" width="1" height="7" fill="#a8a8a8"/><rect x="188" y="191" width="5" height="1" fill="#a8a8a8"/><rect x="198" y="190" width="1" height="13" fill="#a8a8a8"/><rect x="196" y="193" width="5" height="7" fill="#dc8a8a"/><rect x="197" y="194" width="3" height="5" fill="#e81c1c"/><rect x="206" y="191" width="1" height="12" fill="#a8a8a8"/><rect x="204" y="194" width="5" height="6" fill="#a8dc88"/><rect x="205" y="195" width="3" height="4" fill="#80f428"/><rect x="214" y="190" width="1" height="7" fill="#a8a8a8"/><rect x="212" y="193" width="5" height="1" fill="#a8a8a8"/><rect x="222" y="188" width="1" height="7" fill="#a8a8a8"/><rect x="220" y="191" width="5" height="1" fill="#a8a8a8"/><rect x="230" y="191" width="1" height="12" fill="#a8a8a8"/><rect x="228" y="194" width="5" height="6" fill="#dc8a8a"/><rect x="229" y="195" width="3" height="4" fill="#e81c1c"/><rect x="238" y="191" width="1" height="12" fill="#a8a8a8"/><rect x="236" y="194" width="5" height="6" fill="#a8dc88"/><rect x="237" y="195" width="3" height="4" fill="#80f428"/><rect x="246" y="190" width="1" height="11" fill="#a8a8a8"/><rect x="244" y="193" width="5" height="5" fill="#dc8a8a"/><rect x="245" y="194" width="3" height="3" fill="#e81c1c"/><rect x="254" y="194" width="1" height="7" fill="#a8a8a8"/><rect x="252" y="197" width="5" height="1" fill="#a8a8a8"/><rect x="262" y="184" width="1" height="15" fill="#a8a8a8"/><rect x="260" y="187" width="5" height="9" fill="#a8dc88"/><rect x="261" y="188" width="3" height="7" fill="#80f428"/><rect x="270" y="184" width="1" height="7" fill="#a8a8a8"/><rect x="268" y="187" width="5" height="1" fill="#a8a8a8"/><rect x="278" y="185" width="1" height="7" fill="#a8a8a8"/><rect x="276" y="188" width="5" height="1" fill="#a8a8a8"/><rect x="286" y="187" width="1" height="9" fill="#a8a8a8"/><rect x="284" y="190" width="5" height="3" fill="#dc8a8a"/><rect x="285" y="191" width="3" height="1" fill="#e81c1c"/><rect x="294" y="190" width="1" height="7" fill="#a8a8a8"/><rect x="292" y="193" width="5" height="1" fill="#a8a8a8"/><rect x="302" y="189" width="1" height="7" fill="#a8a8a8"/><rect x="300" y="192" width="5" height="1" fill="#a8a8a8"/><rect x="310" y="186" width="1" height="7" fill="#a8a8a8"/><rect x="308" y="189" width="5" height="1" fill="#a8a8a8"/><rect x="318" y="186" width="1" height="7" fill="#a8a8a8"/><rect x="316" y="189" width="5" height="1" fill="#a8a8a8"/><rect x="326" y="186" width="1" height="7" fill="#a8a8a8"/><rect x="324" y="189" width="5" height="1" fill="#a8a8a8"/><rect x="334" y="175" width="1" height="17" fill="#a8a8a8"/><rect x="332" y="178" width="5" height="11" fill="#a8dc88"/><rect x="333" y="179" width="3" height="9" fill="#80f428"/><rect x="342" y="168" width="1" height="12" fill="#a8a8a8"/><rect x="340" y="171" width="5" height="6" fill="#a8dc88"/><rect x="341" y="172" width="3" height="4" fill="#80f428"/><rect x="350" y="163" width="1" height="11" fill="#a8a8a8"/><rect x="348" y="166" width="5" height="5" fill="#a8dc88"/><rect x="349" y="167" width="3" height="3" fill="#80f428"/><rect x="358" y="163" width="1" height="12" fill="#a8a8a8"/><rect x="356" y="166" width="5" height="6" fill="#dc8a8a"/><rect x="357" y="167" width="3" height="4" fill="#e81c1c"/><rect x="366" y="168" width="1" height="8" fill="#a8a8a8"/><rect x="364" y="171" width="5" height="2" fill="#a8dc88"/><rect x="374" y="165" width="1" height="7" fill="#a8a8a8"/><rect x="372" y="168" width="5" height="1" fill="#a8a8a8"/><rect x="382" y="165" width="1" height="7" fill="#a8a8a8"/><rect x="380" y="168" width="5" height="1" fill="#a8a8a8"/><rect x="390" y="165" width="1" height="7" fill="#a8a8a8"/><rect x="388" y="168" width="5" height="1" fill="#a8a8a8"/><rect x="398" y="158" width="1" height="15" fill="#a8a8a8"/><rect x="396" y="161" width="5" height="9" fill="#a8dc88"/><rect x="397" y="162" width="3" height="7" fill="#80f428"/><rect x="406" y="144" width="1" height="16" fill="#a8a8a8"/><rect x="404" y="147" width="5" height="10" fill="#a8dc88"/><rect x="405" y="148" width="3" height="8" fill="#80f428"/><rect x="414" y="143" width="1" height="7" fill="#a8a8a8"/><rect x="412" y="146" width="5" height="1" fill="#a8a8a8"/><rect x="422" y="134" width="1" height="15" fill="#a8a8a8"/><rect x="420" y="137" width="5" height="9" fill="#a8dc88"/><rect x="421" y="138" width="3" height="7" fill="#80f428"/><rect x="430" y="133" width="1" height="7" fill="#a8a8a8"/><rect x="428" y="136" width="5" height="1" fill="#a8a8a8"/><rect x="438" y="126" width="1" height="13" fill="#a8a8a8"/><rect x="436" y="129" width="5" height="7" fill="#a8dc88"/><rect x="437" y="130" width="3" height="5" fill="#80f428"/><rect x="446" y="124" width="1" height="7" fill="#a8a8a8"/><rect x="444" y="127" width="5" height="1" fill="#a8a8a8"/><rect x="454" y="120" width="1" height="10" fill="#a8a8a8"/><rect x="452" y="123" width="5" height="4" fill="#dc8a8a"/><rect x="453" y="124" width="3" height="2" fill="#e81c1c"/><rect x="462" y="118" width="1" height="12" fill="#a8a8a8"/><rect x="460" y="121" width="5" height="6" fill="#a8dc88"/><rect x="461" y="122" width="3" height="4" fill="#80f428"/><rect x="470" y="118" width="1" height="7" fill="#a8a8a8"/><rect x="468" y="121" width="5" height="1" fill="#a8a8a8"/><rect x="478" y="109" width="1" height="17" fill="#a8a8a8"/><rect x="476" y="112" width="5" height="11" fill="#a8dc88"/><rect x="477" y="113" width="3" height="9" fill="#80f428"/><rect x="486" y="102" width="1" height="13" fill="#a8a8a8"/><rect x="484" y="105" width="5" height="7" fill="#a8dc88"/><rect x="485" y="106" width="3" height="5" fill="#80f428"/><rect x="494" y="101" width="1" height="16" fill="#a8a8a8"/><rect x="492" y="104" width="5" height="10" fill="#dc8a8a"/><rect x="493" y="105" width="3" height="8" fill="#e81c1c"/><rect x="502" y="105" width="1" height="12" fill="#a8a8a8"/><rect x="500" y="108" width="5" height="6" fill="#a8dc88"/><rect x="501" y="109" width="3" height="4" fill="#80f428"/><rect x="510" y="105" width="1" height="12" fill="#a8a8a8"/><rect x="508" y="108" width="5" height="6" fill="#dc8a8a"/><rect x="509" y="109" width="3" height="4" fill="#e81c1c"/><rect x="518" y="101" width="1" height="16" fill="#a8a8a8"/><rect x="516" y="104" width="5" height="10" fill="#a8dc88"/><rect x="517" y="105" width="3" height="8" fill="#80f428"/><rect x="526" y="101" width="1" height="17" fill="#a8a8a8"/><rect x="524" y="104" width="5" height="11" fill="#dc8a8a"/><rect x="525" y="105" width="3" height="9" fill="#e81c1c"/><rect x="534" y="107" width="1" height="11" fill="#a8a8a8"/><rect x="532" y="110" width="5" height="5" fill="#a8dc88"/><rect x="533" y="111" width="3" height="3" fill="#80f428"/><rect x="542" y="107" width="1" height="11" fill="#a8a8a8"/><rect x="540" y="110" width="5" height="5" fill="#dc8a8a"/><rect x="541" y="111" width="3" height="3" fill="#e81c1c"/><rect x="550" y="113" width="1" height="10" fill="#a8a8a8"/><rect x="548" y="116" width="5" height="4" fill="#dc8a8a"/><rect x="549" y="117" width="3" height="2" fill="#e81c1c"/><rect x="558" y="112" width="1" height="10" fill="#a8a8a8"/><rect x="556" y="115" width="5" height="4" fill="#a8dc88"/><rect x="557" y="116" width="3" height="2" fill="#80f428"/><rect x="566" y="112" width="1" height="18" fill="#a8a8a8"/><rect x="564" y="115" width="5" height="12" fill="#dc8a8a"/><rect x="565" y="116" width="3" height="10" fill="#e81c1c"/><rect x="574" y="123" width="1" height="7" fill="#a8a8a8"/><rect x="572" y="126" width="5" height="1" fill="#a8a8a8"/><rect x="582" y="108" width="1" height="21" fill="#a8a8a8"/><rect x="580" y="111" width="5" height="15" fill="#a8dc88"/><rect x="581" y="112" width="3" height="13" fill="#80f428"/><rect x="590" y="109" width="1" height="12" fill="#a8a8a8"/><rect x="588" y="112" width="5" height="6" fill="#dc8a8a"/><rect x="589" y="113" width="3" height="4" fill="#e81c1c"/><rect x="598" y="115" width="1" height="9" fill="#a8a8a8"/><rect x="596" y="118" width="5" height="3" fill="#dc8a8a"/><rect x="597" y="119" width="3" height="1" fill="#e81c1c"/><rect x="606" y="108" width="1" height="16" fill="#a8a8a8"/><rect x="604" y="111" width="5" height="10" fill="#a8dc88"/><rect x="605" y="112" width="3" height="8" fill="#80f428"/><rect x="614" y="108" width="1" height="13" fill="#a8a8a8"/><rect x="612" y="111" width="5" height="7" fill="#dc8a8a"/><rect x="613" y="112" width="3" height="5" fill="#e81c1c"/><rect x="622" y="115" width="1" height="13" fill="#a8a8a8"/><rect x="620" y="118" width="5" height="7" fill="#dc8a8a"/><rect x="621" y="119" width="3" height="5" fill="#e81c1c"/><rect x="630" y="123" width="1" height="7" fill="#a8a8a8"/><rect x="628" y="126" width="5" height="1" fill="#a8a8a8"/><rect x="638" y="124" width="1" height="14" fill="#a8a8a8"/><rect x="636" y="127" width="5" height="8" fill="#dc8a8a"/><rect x="637" y="128" width="3" height="6" fill="#e81c1c"/><rect x="646" y="132" width="1" height="7" fill="#a8a8a8"/><rect x="644" y="135" width="5" height="1" fill="#a8a8a8"/><rect x="654" y="133" width="1" height="7" fill="#a8a8a8"/><rect x="652" y="136" width="5" height="1" fill="#a8a8a8"/><rect x="662" y="133" width="1" height="11" fill="#a8a8a8"/><rect x="660" y="136" width="5" height="5" fill="#dc8a8a"/><rect x="661" y="137" width="3" height="3" fill="#e81c1c"/><rect x="670" y="132" width="1" height="11" fill="#a8a8a8"/><rect x="668" y="135" width="5" height="5" fill="#a8dc88"/><rect x="669" y="136" width="3" height="3" fill="#80f428"/><rect x="678" y="130" width="1" height="8" fill="#a8a8a8"/><rect x="676" y="133" width="5" height="2" fill="#a8dc88"/><rect x="686" y="128" width="1" height="7" fill="#a8a8a8"/><rect x="684" y="131" width="5" height="1" fill="#a8a8a8"/><rect x="694" y="127" width="1" height="13" fill="#a8a8a8"/><rect x="692" y="130" width="5" height="7" fill="#dc8a8a"/><rect x="693" y="131" width="3" height="5" fill="#e81c1c"/><rect x="702" y="134" width="1" height="7" fill="#a8a8a8"/><rect x="700" y="137" width="5" height="1" fill="#a8a8a8"/><rect x="710" y="132" width="1" height="7" fill="#a8a8a8"/><rect x="708" y="135" width="5" height="1" fill="#a8a8a8"/><rect x="718" y="131" width="1" height="17" fill="#a8a8a8"/><rect x="716" y="134" width="5" height="11" fill="#dc8a8a"/><rect x="717" y="135" width="3" height="9" fill="#e81c1c"/><rect x="726" y="141" width="1" height="11" fill="#a8a8a8"/><rect x="724" y="144" width="5" height="5" fill="#dc8a8a"/><rect x="725" y="145" width="3" height="3" fill="#e81c1c"/><rect x="734" y="144" width="1" height="9" fill="#a8a8a8"/><rect x="732" y="147" width="5" height="3" fill="#a8dc88"/><rect x="733" y="148" width="3" height="1" fill="#80f428"/><rect x="742" y="144" width="1" height="7" fill="#a8a8a8"/><rect x="740" y="147" width="5" height="1" fill="#a8a8a8"/><rect x="750" y="145" width="1" height="7" fill="#a8a8a8"/><rect x="748" y="148" width="5" height="1" fill="#a8a8a8"/><rect x="758" y="141" width="1" height="12" fill="#a8a8a8"/><rect x="756" y="144" width="5" height="6" fill="#a8dc88"/><rect x="757" y="145" width="3" height="4" fill="#80f428"/><rect x="766" y="130" width="1" height="17" fill="#a8a8a8"/><rect x="764" y="133" width="5" height="11" fill="#a8dc88"/><rect x="765" y="134" width="3" height="9" fill="#80f428"/><rect x="774" y="130" width="1" height="9" fill="#a8a8a8"/><rect x="772" y="133" width="5" height="3" fill="#dc8a8a"/><rect x="773" y="134" width="3" height="1" fill="#e81c1c"/><rect x="782" y="132" width="1" height="7" fill="#a8a8a8"/><rect x="780" y="135" width="5" height="1" fill="#a8a8a8"/><rect x="790" y="133" width="1" height="10" fill="#a8a8a8"/><rect x="788" y="136" width="5" height="4" fill="#dc8a8a"/><rect x="789" y="137" width="3" height="2" fill="#e81c1c"/><rect x="798" y="137" width="1" height="7" fill="#a8a8a8"/><rect x="796" y="140" width="5" height="1" fill="#a8a8a8"/><rect x="806" y="127" width="1" height="15" fill="#a8a8a8"/><rect x="804" y="130" width="5" height="9" fill="#a8dc88"/><rect x="805" y="131" width="3" height="7" fill="#80f428"/><rect x="814" y="129" width="1" height="10" fill="#a8a8a8"/><rect x="812" y="132" width="5" height="4" fill="#dc8a8a"/><rect x="813" y="133" width="3" height="2" fill="#e81c1c"/><rect x="822" y="132" width="1" height="7" fill="#a8a8a8"/><rect x="820" y="135" width="5" height="1" fill="#a8a8a8"/><rect x="830" y="131" width="1" height="12" fill="#a8a8a8"/><rect x="828" y="134" width="5" height="6" fill="#dc8a8a"/><rect x="829" y="135" width="3" height="4" fill="#e81c1c"/><rect x="838" y="133" width="1" height="9" fill="#a8a8a8"/><rect x="836" y="136" width="5" height="3" fill="#a8dc88"/><rect x="837" y="137" width="3" height="1" fill="#80f428"/><rect x="846" y="132" width="1" height="9" fill="#a8a8a8"/><rect x="844" y="135" width="5" height="3" fill="#dc8a8a"/><rect x="845" y="136" width="3" height="1" fill="#e81c1c"/><rect x="854" y="136" width="1" height="16" fill="#a8a8a8"/><rect x="852" y="139" width="5" height="10" fill="#dc8a8a"/><rect x="853" y="140" width="3" height="8" fill="#e81c1c"/><rect x="862" y="142" width="1" height="10" fill="#a8a8a8"/><rect x="860" y="145" width="5" height="4" fill="#a8dc88"/><rect x="861" y="146" width="3" height="2" fill="#80f428"/><rect x="870" y="134" width="1" height="14" fill="#a8a8a8"/><rect x="868" y="137" width="5" height="8" fill="#a8dc88"/><rect x="869" y="138" width="3" height="6" fill="#80f428"/><rect x="878" y="129" width="1" height="10" fill="#a8a8a8"/><rect x="876" y="132" width="5" height="4" fill="#a8dc88"/><rect x="877" y="133" width="3" height="2" fill="#80f428"/><rect x="886" y="123" width="1" height="13" fill="#a8a8a8"/><rect x="884" y="126" width="5" height="7" fill="#a8dc88"/><rect x="885" y="127" width="3" height="5" fill="#80f428"/><rect x="894" y="124" width="1" height="10" fill="#a8a8a8"/><rect x="892" y="127" width="5" height="4" fill="#dc8a8a"/><rect x="893" y="128" width="3" height="2" fill="#e81c1c"/><rect x="902" y="127" width="1" height="14" fill="#a8a8a8"/><rect x="900" y="130" width="5" height="8" fill="#dc8a8a"/><rect x="901" y="131" width="3" height="6" fill="#e81c1c"/><rect x="910" y="128" width="1" height="12" fill="#a8a8a8"/><rect x="908" y="131" width="5" height="6" fill="#a8dc88"/><rect x="909" y="132" width="3" height="4" fill="#80f428"/><rect x="918" y="124" width="1" height="7" fill="#a8a8a8"/><rect x="916" y="127" width="5" height="1" fill="#a8a8a8"/><rect x="926" y="120" width="1" height="9" fill="#a8a8a8"/><rect x="924" y="123" width="5" height="3" fill="#a8dc88"/><rect x="925" y="124" width="3" height="1" fill="#80f428"/><rect x="934" y="117" width="1" height="9" fill="#a8a8a8"/><rect x="932" y="120" width="5" height="3" fill="#a8dc88"/><rect x="933" y="121" width="3" height="1" fill="#80f428"/><rect x="942" y="114" width="1" height="9" fill="#a8a8a8"/><rect x="940" y="117" width="5" height="3" fill="#a8dc88"/><rect x="941" y="118" width="3" height="1" fill="#80f428"/><rect x="950" y="113" width="1" height="7" fill="#a8a8a8"/><rect x="948" y="116" width="5" height="1" fill="#a8a8a8"/><rect x="958" y="107" width="1" height="10" fill="#a8a8a8"/><rect x="956" y="110" width="5" height="4" fill="#a8dc88"/><rect x="957" y="111" width="3" height="2" fill="#80f428"/><rect x="966" y="94" width="1" height="18" fill="#a8a8a8"/><rect x="964" y="97" width="5" height="12" fill="#a8dc88"/><rect x="965" y="98" width="3" height="10" fill="#80f428"/><rect x="974" y="95" width="1" height="7" fill="#a8a8a8"/><rect x="972" y="98" width="5" height="1" fill="#a8a8a8"/><rect x="982" y="95" width="1" height="7" fill="#a8a8a8"/><rect x="980" y="98" width="5" height="1" fill="#a8a8a8"/><rect x="990" y="96" width="1" height="7" fill="#a8a8a8"/><rect x="988" y="99" width="5" height="1" fill="#a8a8a8"/><rect x="998" y="97" width="1" height="11" fill="#a8a8a8"/><rect x="996" y="100" width="5" height="5" fill="#dc8a8a"/><rect x="997" y="101" width="3" height="3" fill="#e81c1c"/><rect x="1006" y="102" width="1" height="7" fill="#a8a8a8"/><rect x="1004" y="105" width="5" height="1" fill="#a8a8a8"/><rect x="1014" y="105" width="1" height="7" fill="#a8a8a8"/><rect x="1012" y="108" width="5" height="1" fill="#a8a8a8"/><rect x="1022" y="102" width="1" height="9" fill="#a8a8a8"/><rect x="1020" y="105" width="5" height="3" fill="#a8dc88"/><rect x="1021" y="106" width="3" height="1" fill="#80f428"/><rect x="1030" y="101" width="1" height="7" fill="#a8a8a8"/><rect x="1028" y="104" width="5" height="1" fill="#a8a8a8"/><rect x="1038" y="101" width="1" height="13" fill="#a8a8a8"/><rect x="1036" y="104" width="5" height="7" fill="#dc8a8a"/><rect x="1037" y="105" width="3" height="5" fill="#e81c1c"/><rect x="1046" y="107" width="1" height="7" fill="#a8a8a8"/><rect x="1044" y="110" width="5" height="1" fill="#a8a8a8"/><rect x="1054" y="103" width="1" height="14" fill="#a8a8a8"/><rect x="1052" y="106" width="5" height="8" fill="#a8dc88"/><rect x="1053" y="107" width="3" height="6" fill="#80f428"/><rect x="1062" y="103" width="1" height="9" fill="#a8a8a8"/><rect x="1060" y="106" width="5" height="3" fill="#dc8a8a"/><rect x="1061" y="107" width="3" height="1" fill="#e81c1c"/><rect x="1070" y="103" width="1" height="9" fill="#a8a8a8"/><rect x="1068" y="106" width="5" height="3" fill="#a8dc88"/><rect x="1069" y="107" width="3" height="1" fill="#80f428"/><rect x="1078" y="103" width="1" height="9" fill="#a8a8a8"/><rect x="1076" y="106" width="5" height="3" fill="#dc8a8a"/><rect x="1077" y="107" width="3" height="1" fill="#e81c1c"/><rect x="1086" y="106" width="1" height="7" fill="#a8a8a8"/><rect x="1084" y="109" width="5" height="1" fill="#a8a8a8"/><rect x="1094" y="102" width="1" height="10" fill="#a8a8a8"/><rect x="1092" y="105" width="5" height="4" fill="#a8dc88"/><rect x="1093" y="106" width="3" height="2" fill="#80f428"/><rect x="1102" y="99" width="1" height="9" fill="#a8a8a8"/><rect x="1100" y="102" width="5" height="3" fill="#a8dc88"/><rect x="1101" y="103" width="3" height="1" fill="#80f428"/><rect x="1110" y="96" width="1" height="9" fill="#a8a8a8"/><rect x="1108" y="99" width="5" height="3" fill="#a8dc88"/><rect x="1109" y="100" width="3" height="1" fill="#80f428"/><rect x="1118" y="96" width="1" height="7" fill="#a8a8a8"/><rect x="1116" y="99" width="5" height="1" fill="#a8a8a8"/><rect x="1126" y="95" width="1" height="7" fill="#a8a8a8"/><rect x="1124" y="98" width="5" height="1" fill="#a8a8a8"/><rect x="1134" y="95" width="1" height="7" fill="#a8a8a8"/><rect x="1132" y="98" width="5" height="1" fill="#a8a8a8"/><rect x="1142" y="95" width="1" height="13" fill="#a8a8a8"/><rect x="1140" y="98" width="5" height="7" fill="#dc8a8a"/><rect x="1141" y="99" width="3" height="5" fill="#e81c1c"/><rect x="1150" y="103" width="1" height="11" fill="#a8a8a8"/><rect x="1148" y="106" width="5" height="5" fill="#dc8a8a"/><rect x="1149" y="107" width="3" height="3" fill="#e81c1c"/><rect x="1158" y="108" width="1" height="11" fill="#a8a8a8"/><rect x="1156" y="111" width="5" height="5" fill="#dc8a8a"/><rect x="1157" y="112" width="3" height="3" fill="#e81c1c"/><rect x="1166" y="114" width="1" height="11" fill="#a8a8a8"/><rect x="1164" y="117" width="5" height="5" fill="#dc8a8a"/><rect x="1165" y="118" width="3" height="3" fill="#e81c1c"/><rect x="1174" y="119" width="1" height="7" fill="#a8a8a8"/><rect x="1172" y="122" width="5" height="1" fill="#a8a8a8"/><rect x="1182" y="115" width="1" height="10" fill="#a8a8a8"/><rect x="1180" y="118" width="5" height="4" fill="#a8dc88"/><rect x="1181" y="119" width="3" height="2" fill="#80f428"/><rect x="1190" y="113" width="1" height="7" fill="#a8a8a8"/><rect x="1188" y="116" width="5" height="1" fill="#a8a8a8"/><rect x="1198" y="108" width="1" height="10" fill="#a8a8a8"/><rect x="1196" y="111" width="5" height="4" fill="#a8dc88"/><rect x="1197" y="112" width="3" height="2" fill="#80f428"/><rect x="1206" y="107" width="1" height="9" fill="#a8a8a8"/><rect x="1204" y="110" width="5" height="3" fill="#dc8a8a"/><rect x="1205" y="111" width="3" height="1" fill="#e81c1c"/><rect x="1214" y="111" width="1" height="7" fill="#a8a8a8"/><rect x="1212" y="114" width="5" height="1" fill="#a8a8a8"/><rect x="1222" y="110" width="1" height="7" fill="#a8a8a8"/><rect x="1220" y="113" width="5" height="1" fill="#a8a8a8"/><rect x="1230" y="106" width="1" height="11" fill="#a8a8a8"/><rect x="1228" y="109" width="5" height="5" fill="#a8dc88"/><rect x="1229" y="110" width="3" height="3" fill="#80f428"/><rect x="1238" y="97" width="1" height="15" fill="#a8a8a8"/><rect x="1236" y="100" width="5" height="9" fill="#a8dc88"/><rect x="1237" y="101" width="3" height="7" fill="#80f428"/><rect x="1246" y="97" width="1" height="7" fill="#a8a8a8"/><rect x="1244" y="100" width="5" height="1" fill="#a8a8a8"/><rect x="1254" y="98" width="1" height="7" fill="#a8a8a8"/><rect x="1252" y="101" width="5" height="1" fill="#a8a8a8"/><rect x="1262" y="98" width="1" height="10" fill="#a8a8a8"/><rect x="1260" y="101" width="5" height="4" fill="#dc8a8a"/><rect x="1261" y="102" width="3" height="2" fill="#e81c1c"/><rect x="1270" y="102" width="1" height="10" fill="#a8a8a8"/><rect x="1268" y="105" width="5" height="4" fill="#dc8a8a"/><rect x="1269" y="106" width="3" height="2" fill="#e81c1c"/><rect x="1278" y="106" width="1" height="14" fill="#a8a8a8"/><rect x="1276" y="109" width="5" height="8" fill="#dc8a8a"/><rect x="1277" y="110" width="3" height="6" fill="#e81c1c"/><rect x="1286" y="114" width="1" height="7" fill="#a8a8a8"/><rect x="1284" y="117" width="5" height="1" fill="#a8a8a8"/><rect x="1294" y="107" width="1" height="13" fill="#a8a8a8"/><rect x="1292" y="110" width="5" height="7" fill="#a8dc88"/><rect x="1293" y="111" width="3" height="5" fill="#80f428"/><rect x="1302" y="106" width="1" height="7" fill="#a8a8a8"/><rect x="1300" y="109" width="5" height="1" fill="#a8a8a8"/><rect x="1310" y="106" width="1" height="7" fill="#a8a8a8"/><rect x="1308" y="109" width="5" height="1" fill="#a8a8a8"/><rect x="1318" y="106" width="1" height="11" fill="#a8a8a8"/><rect x="1316" y="109" width="5" height="5" fill="#dc8a8a"/><rect x="1317" y="110" width="3" height="3" fill="#e81c1c"/><rect x="1326" y="112" width="1" height="10" fill="#a8a8a8"/><rect x="1324" y="115" width="5" height="4" fill="#dc8a8a"/><rect x="1325" y="116" width="3" height="2" fill="#e81c1c"/><rect x="1334" y="117" width="1" height="7" fill="#a8a8a8"/><rect x="1332" y="120" width="5" height="1" fill="#a8a8a8"/><rect x="1342" y="119" width="1" height="13" fill="#a8a8a8"/><rect x="1340" y="122" width="5" height="7" fill="#dc8a8a"/><rect x="1341" y="123" width="3" height="5" fill="#e81c1c"/><rect x="1350" y="126" width="1" height="7" fill="#a8a8a8"/><rect x="1348" y="129" width="5" height="1" fill="#a8a8a8"/><rect x="1358" y="123" width="1" height="9" fill="#a8a8a8"/><rect x="1356" y="126" width="5" height="3" fill="#a8dc88"/><rect x="1357" y="127" width="3" height="1" fill="#80f428"/><rect x="1366" y="123" width="1" height="7" fill="#a8a8a8"/><rect x="1364" y="126" width="5" height="1" fill="#a8a8a8"/><rect x="1374" y="121" width="1" height="10" fill="#a8a8a8"/><rect x="1372" y="124" width="5" height="4" fill="#a8dc88"/><rect x="1373" y="125" width="3" height="2" fill="#80f428"/><rect x="1382" y="115" width="1" height="13" fill="#a8a8a8"/><rect x="1380" y="118" width="5" height="7" fill="#a8dc88"/><rect x="1381" y="119" width="3" height="5" fill="#80f428"/><rect x="1390" y="115" width="1" height="9" fill="#a8a8a8"/><rect x="1388" y="118" width="5" height="3" fill="#dc8a8a"/><rect x="1389" y="119" width="3" height="1" fill="#e81c1c"/><rect x="1398" y="111" width="1" height="14" fill="#a8a8a8"/><rect x="1396" y="114" width="5" height="8" fill="#a8dc88"/><rect x="1397" y="115" width="3" height="6" fill="#80f428"/><rect x="1406" y="108" width="1" height="10" fill="#a8a8a8"/><rect x="1404" y="111" width="5" height="4" fill="#a8dc88"/><rect x="1405" y="112" width="3" height="2" fill="#80f428"/><rect x="1414" y="110" width="1" height="10" fill="#a8a8a8"/><rect x="1412" y="113" width="5" height="4" fill="#dc8a8a"/><rect x="1413" y="114" width="3" height="2" fill="#e81c1c"/><rect x="1422" y="115" width="1" height="7" fill="#a8a8a8"/><rect x="1420" y="118" width="5" height="1" fill="#a8a8a8"/><rect x="1430" y="113" width="1" height="7" fill="#a8a8a8"/><rect x="1428" y="116" width="5" height="1" fill="#a8a8a8"/><rect x="1438" y="105" width="1" height="13" fill="#a8a8a8"/><rect x="1436" y="108" width="5" height="7" fill="#a8dc88"/><rect x="1437" y="109" width="3" height="5" fill="#80f428"/><rect x="1446" y="101" width="1" height="10" fill="#a8a8a8"/><rect x="1444" y="104" width="5" height="4" fill="#a8dc88"/><rect x="1445" y="105" width="3" height="2" fill="#80f428"/><rect x="1454" y="100" width="1" height="7" fill="#a8a8a8"/><rect x="1452" y="103" width="5" height="1" fill="#a8a8a8"/><polyline points="7,187.5 11,188.5 50,189.5 106,190.5 130,190.5 190,191.5 210,191.5 227,192.5 322,192.5 337,191.5 360,189.5 380,186.5 400,184.5 444,175.5 472,169.5 520,158.5 560,151.5 598,143.5 626,141.5 662,140.5 716,139.5 738,140.5 810,140.5 880,139.5 910,138.5 930,137.5 960,135.5 990,131.5 1010,127.5 1025,126.5 1065,124.5 1125,118.5 1145,116.5 1170,117.5 1210,115.5 1242,114.5 1258,113.5 1338,113.5 1346,114.5 1362,115.5 1410,116.5 1442,116.5 1453,115.5" fill="none" stroke="#fbf8ec" stroke-width="1.2" shape-rendering="crispEdges"/><line x1="7" y1="192.5" x2="182" y2="190.5" stroke="#e02020" stroke-width="1"/><line x1="334" y1="178" x2="398" y2="160" stroke="#e8e83c" stroke-width="1"/><line x1="910" y1="127" x2="958" y2="110" stroke="#e8e83c" stroke-width="1"/></svg><svg style="left:0;top:0" width="1680" height="260"><circle cx="182.5" cy="190.5" r="4.6" fill="none" stroke="#e02020" stroke-width="1"/><circle cx="334" cy="178" r="4.6" fill="none" stroke="#e02020" stroke-width="1"/><circle cx="398" cy="159.5" r="4.6" fill="none" stroke="#e8e83c" stroke-width="1"/><circle cx="910" cy="127.5" r="4.6" fill="none" stroke="#e02020" stroke-width="1"/><circle cx="958" cy="110" r="4.6" fill="none" stroke="#e8e83c" stroke-width="1"/></svg><div class="t" style="left:7px;top:239px;color:#fff;font-size:10px;letter-spacing:-0.3px;">17 II 2006</div><div class="t" style="left:71px;top:239px;color:#fff;font-size:10px;letter-spacing:-0.3px;">1 III 00:00</div><div class="t" style="left:135px;top:239px;color:#fff;font-size:10px;letter-spacing:-0.3px;">13 III 00:00</div><div class="t" style="left:199px;top:239px;color:#fff;font-size:10px;letter-spacing:-0.3px;">23 III 00:00</div><div class="t" style="left:263px;top:239px;color:#fff;font-size:10px;letter-spacing:-0.3px;">4 IV 00:00</div><div class="t" style="left:327px;top:239px;color:#fff;font-size:10px;letter-spacing:-0.3px;">14 IV 00:00</div><div class="t" style="left:391px;top:239px;color:#fff;font-size:10px;letter-spacing:-0.3px;">26 IV 00:00</div><div class="t" style="left:455px;top:239px;color:#fff;font-size:10px;letter-spacing:-0.3px;">8 V 00:00</div><div class="t" style="left:519px;top:239px;color:#fff;font-size:10px;letter-spacing:-0.3px;">18 V 00:00</div><div class="t" style="left:583px;top:239px;color:#fff;font-size:10px;letter-spacing:-0.3px;">30 V 00:00</div><div class="t" style="left:647px;top:239px;color:#fff;font-size:10px;letter-spacing:-0.3px;">9 VI 00:00</div><div class="t" style="left:711px;top:239px;color:#fff;font-size:10px;letter-spacing:-0.3px;">21 VI 00:00</div><div class="t" style="left:775px;top:239px;color:#fff;font-size:10px;letter-spacing:-0.3px;">3 VII 00:00</div><div class="t" style="left:839px;top:239px;color:#fff;font-size:10px;letter-spacing:-0.3px;">13 VII 00:00</div><div class="t" style="left:903px;top:239px;color:#fff;font-size:10px;letter-spacing:-0.3px;">25 VII 00:00</div><div class="t" style="left:967px;top:239px;color:#fff;font-size:10px;letter-spacing:-0.3px;">4 VIII 00:00</div><div class="t" style="left:1031px;top:239px;color:#fff;font-size:10px;letter-spacing:-0.3px;">16 VIII 00:00</div><div class="t" style="left:1095px;top:239px;color:#fff;font-size:10px;letter-spacing:-0.3px;">28 VIII 00:00</div><div class="t" style="left:1159px;top:239px;color:#fff;font-size:10px;letter-spacing:-0.3px;">7 IX 00:00</div><div class="t" style="left:1223px;top:239px;color:#fff;font-size:10px;letter-spacing:-0.3px;">19 IX 00:00</div><div class="t" style="left:1287px;top:239px;color:#fff;font-size:10px;letter-spacing:-0.3px;">29 IX 00:00</div><div class="t" style="left:1351px;top:239px;color:#fff;font-size:10px;letter-spacing:-0.3px;">11 X 00:00</div><div class="t" style="left:1415px;top:239px;color:#fff;font-size:10px;letter-spacing:-0.3px;">23 X 00:00</div><div class="t" style="left:1639px;top:59px;color:#fff;">1.9620</div><div class="t" style="left:1639px;top:123px;color:#fff;">1.8530</div><div class="t" style="left:1639px;top:155px;color:#fff;">1.7985</div><div class="t" style="left:1639px;top:188px;color:#fff;">1.7440</div><div class="t" style="left:1639px;top:91px;color:#fff;">1.8075</div><div class="a" style="left:1639px;top:95px;width:33px;height:14px;background:#ffffff;"></div><div class="t" style="left:1639px;top:96px;color:#000;">1.8986</div><div class="a" style="left:1639px;top:217px;width:33px;height:14px;background:#f01010;"></div><div class="t" style="left:1639px;top:218px;color:#600;">1.6919</div><div class="t" style="left:10px;top:69px;color:#fff;letter-spacing:-0.25px;background:#000;">GBPUSD, spr: 4, lot: 70000 GBP</div><div class="t" style="left:1628px;top:70px;color:#fff;transform:translateX(-100%);">október 30 po 23:59</div><div class="t" style="left:1628px;top:84px;color:#fff;transform:translateX(-100%);">cell: 545, scale: 100%</div><div class="t" style="left:186px;top:197px;color:#e82020;">Buy</div><div class="t" style="left:338px;top:184px;color:#e82020;">Buy</div><div class="t" style="left:914px;top:135px;color:#e82020;">Buy</div><div class="t" style="left:402px;top:149px;color:#ffff40;">Sell</div><div class="t" style="left:962px;top:100px;color:#ffff40;">Sell</div><div class="a" style="left:1px;top:256px;width:1678px;height:1px;background:#ffffff;"></div><div class="a" style="left:1px;top:257px;width:1678px;height:1px;background:#a0a0a0;"></div><div class="a" style="left:0px;top:256px;width:1px;height:24px;background:#808080;"></div><div class="a" style="left:1px;top:276px;width:1607px;height:1px;background:#ffffff;"></div><svg style="left:0px;top:258px" width="110" height="19"><path d="M60 0 L97 0 L92 18 L65 18 Z" fill="#d4d0c8"/><path d="M60.5 0.5 L65.5 17.5 L92.5 17.5 L97.5 0.5" fill="none" stroke="#000" stroke-width="1.1"/><path d="M6 0 L64 0 L59 18 L11 18 Z" fill="#ffffff"/><path d="M6.5 0.5 L11.5 17.5 L59.5 17.5 L64.5 0.5" fill="none" stroke="#000" stroke-width="1.1"/></svg><div class="t" style="left:13px;top:259px;letter-spacing:-0.3px;">GBPUSD</div><div class="t" style="left:67px;top:260px;letter-spacing:-0.3px;">Profit</div><div class="a" style="left:1403px;top:258px;width:16px;height:18px;background:#d4d0c8;"></div><div class="a" style="left:1403px;top:258px;width:16px;height:1px;background:#ffffff;"></div><div class="a" style="left:1403px;top:258px;width:1px;height:18px;background:#ffffff;"></div><div class="a" style="left:1403px;top:275px;width:16px;height:1px;background:#404040;"></div><div class="a" style="left:1418px;top:258px;width:1px;height:18px;background:#404040;"></div><div class="a" style="left:1404px;top:274px;width:14px;height:1px;background:#808080;"></div><div class="a" style="left:1417px;top:259px;width:1px;height:16px;background:#808080;"></div><div class="a" style="left:1419px;top:258px;width:151px;height:18px;background-color:#d4d0c8;background-image:linear-gradient(45deg,#fff 25%,transparent 25%,transparent 75%,#fff 75%),linear-gradient(45deg,#fff 25%,transparent 25%,transparent 75%,#fff 75%);background-size:2px 2px;background-position:0 0,1px 1px;"></div><div class="a" style="left:1570px;top:258px;width:21px;height:18px;background:#d4d0c8;"></div><div class="a" style="left:1570px;top:258px;width:21px;height:1px;background:#ffffff;"></div><div class="a" style="left:1570px;top:258px;width:1px;height:18px;background:#ffffff;"></div><div class="a" style="left:1570px;top:275px;width:21px;height:1px;background:#404040;"></div><div class="a" style="left:1590px;top:258px;width:1px;height:18px;background:#404040;"></div><div class="a" style="left:1571px;top:274px;width:19px;height:1px;background:#808080;"></div><div class="a" style="left:1589px;top:259px;width:1px;height:16px;background:#808080;"></div><div class="a" style="left:1591px;top:258px;width:16px;height:18px;background:#d4d0c8;"></div><div class="a" style="left:1591px;top:258px;width:16px;height:1px;background:#ffffff;"></div><div class="a" style="left:1591px;top:258px;width:1px;height:18px;background:#ffffff;"></div><div class="a" style="left:1591px;top:275px;width:16px;height:1px;background:#404040;"></div><div class="a" style="left:1606px;top:258px;width:1px;height:18px;background:#404040;"></div><div class="a" style="left:1592px;top:274px;width:14px;height:1px;background:#808080;"></div><div class="a" style="left:1605px;top:259px;width:1px;height:16px;background:#808080;"></div><div class="a" style="left:1607px;top:258px;width:18px;height:18px;background:#d4d0c8;"></div><div class="a" style="left:1607px;top:258px;width:18px;height:1px;background:#ffffff;"></div><div class="a" style="left:1607px;top:258px;width:1px;height:18px;background:#ffffff;"></div><div class="a" style="left:1607px;top:275px;width:18px;height:1px;background:#404040;"></div><div class="a" style="left:1624px;top:258px;width:1px;height:18px;background:#404040;"></div><div class="a" style="left:1608px;top:274px;width:16px;height:1px;background:#808080;"></div><div class="a" style="left:1623px;top:259px;width:1px;height:16px;background:#808080;"></div><div class="a" style="left:1625px;top:258px;width:18px;height:18px;background:#d4d0c8;"></div><div class="a" style="left:1625px;top:258px;width:18px;height:1px;background:#ffffff;"></div><div class="a" style="left:1625px;top:258px;width:1px;height:18px;background:#ffffff;"></div><div class="a" style="left:1625px;top:275px;width:18px;height:1px;background:#404040;"></div><div class="a" style="left:1642px;top:258px;width:1px;height:18px;background:#404040;"></div><div class="a" style="left:1626px;top:274px;width:16px;height:1px;background:#808080;"></div><div class="a" style="left:1641px;top:259px;width:1px;height:16px;background:#808080;"></div><div class="a" style="left:1643px;top:258px;width:18px;height:18px;background:#d4d0c8;"></div><div class="a" style="left:1643px;top:258px;width:18px;height:1px;background:#ffffff;"></div><div class="a" style="left:1643px;top:258px;width:1px;height:18px;background:#ffffff;"></div><div class="a" style="left:1643px;top:275px;width:18px;height:1px;background:#404040;"></div><div class="a" style="left:1660px;top:258px;width:1px;height:18px;background:#404040;"></div><div class="a" style="left:1644px;top:274px;width:16px;height:1px;background:#808080;"></div><div class="a" style="left:1659px;top:259px;width:1px;height:16px;background:#808080;"></div><div class="a" style="left:1661px;top:258px;width:18px;height:18px;background:#d4d0c8;"></div><div class="a" style="left:1661px;top:258px;width:18px;height:1px;background:#ffffff;"></div><div class="a" style="left:1661px;top:258px;width:1px;height:18px;background:#ffffff;"></div><div class="a" style="left:1661px;top:275px;width:18px;height:1px;background:#404040;"></div><div class="a" style="left:1678px;top:258px;width:1px;height:18px;background:#404040;"></div><div class="a" style="left:1662px;top:274px;width:16px;height:1px;background:#808080;"></div><div class="a" style="left:1677px;top:259px;width:1px;height:16px;background:#808080;"></div><svg style="left:0;top:0" width="1680" height="280" shape-rendering="crispEdges"><path d="M1413 263 V270 L1409 266.5 Z" fill="#000"/><path d="M1598 263 V270 L1602 266.5 Z" fill="#000"/><rect x="1612" y="261" width="2" height="11" fill="#000080"/><path d="M1621 261 V272 L1615 266.5 Z" fill="#108010"/><path d="M1636 261 V272 L1630 266.5 Z" fill="#108010"/><path d="M1651 261 V272 L1657 266.5 Z" fill="#108010"/><path d="M1667 261 V272 L1673 266.5 Z" fill="#108010"/><rect x="1674" y="261" width="2" height="11" fill="#000080"/></svg><div class="a" style="left:1679px;top:256px;width:1px;height:24px;background:#808080;"></div><div class="a" style="left:1px;top:280px;width:1679px;height:692px;background:#ffffff;"></div><div class="a" style="left:0px;top:280px;width:1679px;height:1px;background:#808080;"></div><div class="a" style="left:0px;top:280px;width:1px;height:692px;background:#808080;"></div><div class="a" style="left:1px;top:281px;width:1678px;height:19px;background:#ece9d8;"></div><div class="a" style="left:1px;top:297px;width:1678px;height:1px;background:#e2dfcd;"></div><div class="a" style="left:1px;top:298px;width:1678px;height:1px;background:#d6d2c2;"></div><div class="a" style="left:1px;top:299px;width:1678px;height:1px;background:#cbc7b8;"></div><div class="t" style="left:3px;top:284px;">Ticket</div><div class="a" style="left:116px;top:283px;width:1px;height:14px;background:#c7c5b2;"></div><div class="a" style="left:117px;top:283px;width:1px;height:14px;background:#ffffff;"></div><div class="t" style="left:116px;width:116px;text-align:center;top:284px;">Symbol</div><div class="a" style="left:232px;top:283px;width:1px;height:14px;background:#c7c5b2;"></div><div class="a" style="left:233px;top:283px;width:1px;height:14px;background:#ffffff;"></div><div class="t" style="left:232px;width:116px;text-align:center;top:284px;">Type</div><div class="a" style="left:348px;top:283px;width:1px;height:14px;background:#c7c5b2;"></div><div class="a" style="left:349px;top:283px;width:1px;height:14px;background:#ffffff;"></div><div class="t" style="right:1218px;top:284px;">Lots</div><div class="a" style="left:464px;top:283px;width:1px;height:14px;background:#c7c5b2;"></div><div class="a" style="left:465px;top:283px;width:1px;height:14px;background:#ffffff;"></div><div class="t" style="right:1017px;top:284px;">Open Time</div><div class="a" style="left:665px;top:283px;width:1px;height:14px;background:#c7c5b2;"></div><div class="a" style="left:666px;top:283px;width:1px;height:14px;background:#ffffff;"></div><div class="t" style="right:901px;top:284px;">Open Price</div><div class="a" style="left:781px;top:283px;width:1px;height:14px;background:#c7c5b2;"></div><div class="a" style="left:782px;top:283px;width:1px;height:14px;background:#ffffff;"></div><div class="t" style="right:785px;top:284px;">S/L</div><div class="a" style="left:897px;top:283px;width:1px;height:14px;background:#c7c5b2;"></div><div class="a" style="left:898px;top:283px;width:1px;height:14px;background:#ffffff;"></div><div class="t" style="right:669px;top:284px;">T/P</div><div class="a" style="left:1013px;top:283px;width:1px;height:14px;background:#c7c5b2;"></div><div class="a" style="left:1014px;top:283px;width:1px;height:14px;background:#ffffff;"></div><div class="t" style="right:468px;top:284px;">Close Time</div><div class="a" style="left:1214px;top:283px;width:1px;height:14px;background:#c7c5b2;"></div><div class="a" style="left:1215px;top:283px;width:1px;height:14px;background:#ffffff;"></div><div class="t" style="right:352px;top:284px;">Close Price</div><div class="a" style="left:1330px;top:283px;width:1px;height:14px;background:#c7c5b2;"></div><div class="a" style="left:1331px;top:283px;width:1px;height:14px;background:#ffffff;"></div><div class="t" style="right:236px;top:284px;">Swap</div><div class="a" style="left:1446px;top:283px;width:1px;height:14px;background:#c7c5b2;"></div><div class="a" style="left:1447px;top:283px;width:1px;height:14px;background:#ffffff;"></div><div class="t" style="right:120px;top:284px;">Points</div><div class="a" style="left:1562px;top:283px;width:1px;height:14px;background:#c7c5b2;"></div><div class="a" style="left:1563px;top:283px;width:1px;height:14px;background:#ffffff;"></div><div class="t" style="right:3px;top:284px;">Profit</div><div class="a" style="left:1px;top:300px;width:1678px;height:19px;background:#ffffff;"></div><div class="a" style="left:1px;top:318px;width:1678px;height:1px;background:#c6c6c6;"></div><div class="t" style="left:2px;top:303px;">206237</div><div class="a" style="left:116px;top:300px;width:1px;height:18px;background:#c6c6c6;"></div><div class="a" style="left:232px;top:300px;width:1px;height:18px;background:#c6c6c6;"></div><div class="t" style="left:232px;width:116px;text-align:center;top:303px;">balance</div><div class="a" style="left:348px;top:300px;width:1px;height:18px;background:#c6c6c6;"></div><div class="t" style="right:1218px;top:303px;">0.0</div><div class="a" style="left:464px;top:300px;width:1px;height:18px;background:#c6c6c6;"></div><div class="t" style="right:1017px;top:303px;">2001.01.03 00:02</div><div class="a" style="left:665px;top:300px;width:1px;height:18px;background:#c6c6c6;"></div><div class="t" style="right:901px;top:303px;">0.00</div><div class="a" style="left:781px;top:300px;width:1px;height:18px;background:#c6c6c6;"></div><div class="t" style="right:785px;top:303px;">0.00</div><div class="a" style="left:897px;top:300px;width:1px;height:18px;background:#c6c6c6;"></div><div class="t" style="right:669px;top:303px;">0.00</div><div class="a" style="left:1013px;top:300px;width:1px;height:18px;background:#c6c6c6;"></div><div class="t" style="right:468px;top:303px;">2001.01.03 00:02</div><div class="a" style="left:1214px;top:300px;width:1px;height:18px;background:#c6c6c6;"></div><div class="t" style="right:352px;top:303px;">0.00</div><div class="a" style="left:1330px;top:300px;width:1px;height:18px;background:#c6c6c6;"></div><div class="t" style="right:236px;top:303px;">0.00</div><div class="a" style="left:1446px;top:300px;width:1px;height:18px;background:#c6c6c6;"></div><div class="t" style="right:120px;top:303px;">0</div><div class="a" style="left:1562px;top:300px;width:1px;height:18px;background:#c6c6c6;"></div><div class="t" style="right:3px;top:303px;">10000.00</div><div class="a" style="left:1px;top:319px;width:1678px;height:19px;background:#ebebeb;"></div><div class="a" style="left:897px;top:318px;width:116px;height:19px;background:#64ec64;"></div><div class="a" style="left:1px;top:337px;width:1678px;height:1px;background:#c6c6c6;"></div><div class="t" style="left:2px;top:322px;">206238</div><div class="a" style="left:116px;top:319px;width:1px;height:18px;background:#c6c6c6;"></div><div class="t" style="left:116px;width:116px;text-align:center;top:322px;">gbpusd</div><div class="a" style="left:232px;top:319px;width:1px;height:18px;background:#c6c6c6;"></div><div class="t" style="left:232px;width:116px;text-align:center;top:322px;">sell</div><div class="a" style="left:348px;top:319px;width:1px;height:18px;background:#c6c6c6;"></div><div class="t" style="right:1218px;top:322px;">1.0</div><div class="a" style="left:464px;top:319px;width:1px;height:18px;background:#c6c6c6;"></div><div class="t" style="right:1017px;top:322px;">2001.02.06 23:59</div><div class="a" style="left:665px;top:319px;width:1px;height:18px;background:#c6c6c6;"></div><div class="t" style="right:901px;top:322px;">1.4596</div><div class="a" style="left:781px;top:319px;width:1px;height:18px;background:#c6c6c6;"></div><div class="t" style="right:785px;top:322px;">1.4896</div><div class="a" style="left:897px;top:319px;width:1px;height:18px;background:#c6c6c6;"></div><div class="t" style="right:669px;top:322px;">1.4296</div><div class="a" style="left:1013px;top:319px;width:1px;height:18px;background:#c6c6c6;"></div><div class="t" style="right:468px;top:322px;">2001.03.16 12:09</div><div class="a" style="left:1214px;top:319px;width:1px;height:18px;background:#c6c6c6;"></div><div class="t" style="right:352px;top:322px;">1.4296</div><div class="a" style="left:1330px;top:319px;width:1px;height:18px;background:#c6c6c6;"></div><div class="t" style="right:236px;top:322px;">-147.00</div><div class="a" style="left:1446px;top:319px;width:1px;height:18px;background:#c6c6c6;"></div><div class="t" style="right:120px;top:322px;">300</div><div class="a" style="left:1562px;top:319px;width:1px;height:18px;background:#c6c6c6;"></div><div class="t" style="right:3px;top:322px;">1953.00</div><div class="a" style="left:1px;top:338px;width:1678px;height:19px;background:#ffffff;"></div><div class="a" style="left:897px;top:337px;width:116px;height:19px;background:#64ec64;"></div><div class="a" style="left:1px;top:356px;width:1678px;height:1px;background:#c6c6c6;"></div><div class="t" style="left:2px;top:341px;">206240</div><div class="a" style="left:116px;top:338px;width:1px;height:18px;background:#c6c6c6;"></div><div class="t" style="left:116px;width:116px;text-align:center;top:341px;">gbpusd</div><div class="a" style="left:232px;top:338px;width:1px;height:18px;background:#c6c6c6;"></div><div class="t" style="left:232px;width:116px;text-align:center;top:341px;">sell</div><div class="a" style="left:348px;top:338px;width:1px;height:18px;background:#c6c6c6;"></div><div class="t" style="right:1218px;top:341px;">1.0</div><div class="a" style="left:464px;top:338px;width:1px;height:18px;background:#c6c6c6;"></div><div class="t" style="right:1017px;top:341px;">2001.05.08 23:59</div><div class="a" style="left:665px;top:338px;width:1px;height:18px;background:#c6c6c6;"></div><div class="t" style="right:901px;top:341px;">1.4255</div><div class="a" style="left:781px;top:338px;width:1px;height:18px;background:#c6c6c6;"></div><div class="t" style="right:785px;top:341px;">1.4555</div><div class="a" style="left:897px;top:338px;width:1px;height:18px;background:#c6c6c6;"></div><div class="t" style="right:669px;top:341px;">1.3955</div><div class="a" style="left:1013px;top:338px;width:1px;height:18px;background:#c6c6c6;"></div><div class="t" style="right:468px;top:341px;">2001.06.06 16:23</div><div class="a" style="left:1214px;top:338px;width:1px;height:18px;background:#c6c6c6;"></div><div class="t" style="right:352px;top:341px;">1.3955</div><div class="a" style="left:1330px;top:338px;width:1px;height:18px;background:#c6c6c6;"></div><div class="t" style="right:236px;top:341px;">-106.57</div><div class="a" style="left:1446px;top:338px;width:1px;height:18px;background:#c6c6c6;"></div><div class="t" style="right:120px;top:341px;">300</div><div class="a" style="left:1562px;top:338px;width:1px;height:18px;background:#c6c6c6;"></div><div class="t" style="right:3px;top:341px;">1993.43</div><div class="a" style="left:1px;top:357px;width:1678px;height:19px;background:#ebebeb;"></div><div class="a" style="left:897px;top:356px;width:116px;height:19px;background:#64ec64;"></div><div class="a" style="left:1px;top:375px;width:1678px;height:1px;background:#c6c6c6;"></div><div class="t" style="left:2px;top:360px;">206242</div><div class="a" style="left:116px;top:357px;width:1px;height:18px;background:#c6c6c6;"></div><div class="t" style="left:116px;width:116px;text-align:center;top:360px;">gbpusd</div><div class="a" style="left:232px;top:357px;width:1px;height:18px;background:#c6c6c6;"></div><div class="t" style="left:232px;width:116px;text-align:center;top:360px;">buy</div><div class="a" style="left:348px;top:357px;width:1px;height:18px;background:#c6c6c6;"></div><div class="t" style="right:1218px;top:360px;">1.0</div><div class="a" style="left:464px;top:357px;width:1px;height:18px;background:#c6c6c6;"></div><div class="t" style="right:1017px;top:360px;">2001.07.18 23:59</div><div class="a" style="left:665px;top:357px;width:1px;height:18px;background:#c6c6c6;"></div><div class="t" style="right:901px;top:360px;">1.4220</div><div class="a" style="left:781px;top:357px;width:1px;height:18px;background:#c6c6c6;"></div><div class="t" style="right:785px;top:360px;">1.3920</div><div class="a" style="left:897px;top:357px;width:1px;height:18px;background:#c6c6c6;"></div><div class="t" style="right:669px;top:360px;">1.4520</div><div class="a" style="left:1013px;top:357px;width:1px;height:18px;background:#c6c6c6;"></div><div class="t" style="right:468px;top:360px;">2001.08.21 21:40</div><div class="a" style="left:1214px;top:357px;width:1px;height:18px;background:#c6c6c6;"></div><div class="t" style="right:352px;top:360px;">1.4520</div><div class="a" style="left:1330px;top:357px;width:1px;height:18px;background:#c6c6c6;"></div><div class="t" style="right:236px;top:360px;">53.55</div><div class="a" style="left:1446px;top:357px;width:1px;height:18px;background:#c6c6c6;"></div><div class="t" style="right:120px;top:360px;">300</div><div class="a" style="left:1562px;top:357px;width:1px;height:18px;background:#c6c6c6;"></div><div class="t" style="right:3px;top:360px;">2153.55</div><div class="a" style="left:1px;top:376px;width:1678px;height:19px;background:#ffffff;"></div><div class="a" style="left:1px;top:394px;width:1678px;height:1px;background:#c6c6c6;"></div><div class="t" style="left:2px;top:379px;">206243</div><div class="a" style="left:116px;top:376px;width:1px;height:18px;background:#c6c6c6;"></div><div class="t" style="left:116px;width:116px;text-align:center;top:379px;">gbpusd</div><div class="a" style="left:232px;top:376px;width:1px;height:18px;background:#c6c6c6;"></div><div class="t" style="left:232px;width:116px;text-align:center;top:379px;">buy</div><div class="a" style="left:348px;top:376px;width:1px;height:18px;background:#c6c6c6;"></div><div class="t" style="right:1218px;top:379px;">1.0</div><div class="a" style="left:464px;top:376px;width:1px;height:18px;background:#c6c6c6;"></div><div class="t" style="right:1017px;top:379px;">2001.09.05 23:59</div><div class="a" style="left:665px;top:376px;width:1px;height:18px;background:#c6c6c6;"></div><div class="t" style="right:901px;top:379px;">1.4574</div><div class="a" style="left:781px;top:376px;width:1px;height:18px;background:#c6c6c6;"></div><div class="t" style="right:785px;top:379px;">1.4274</div><div class="a" style="left:897px;top:376px;width:1px;height:18px;background:#c6c6c6;"></div><div class="t" style="right:669px;top:379px;">1.4874</div><div class="a" style="left:1013px;top:376px;width:1px;height:18px;background:#c6c6c6;"></div><div class="t" style="right:468px;top:379px;">2001.10.09 23:59</div><div class="a" style="left:1214px;top:376px;width:1px;height:18px;background:#c6c6c6;"></div><div class="t" style="right:352px;top:379px;">1.4578</div><div class="a" style="left:1330px;top:376px;width:1px;height:18px;background:#c6c6c6;"></div><div class="t" style="right:236px;top:379px;">53.55</div><div class="a" style="left:1446px;top:376px;width:1px;height:18px;background:#c6c6c6;"></div><div class="t" style="right:120px;top:379px;">4</div><div class="a" style="left:1562px;top:376px;width:1px;height:18px;background:#c6c6c6;"></div><div class="t" style="right:3px;top:379px;">81.55</div><div class="a" style="left:1px;top:395px;width:1678px;height:19px;background:#ebebeb;"></div><div class="a" style="left:897px;top:394px;width:116px;height:19px;background:#64ec64;"></div><div class="a" style="left:1px;top:413px;width:1678px;height:1px;background:#c6c6c6;"></div><div class="t" style="left:2px;top:398px;">206244</div><div class="a" style="left:116px;top:395px;width:1px;height:18px;background:#c6c6c6;"></div><div class="t" style="left:116px;width:116px;text-align:center;top:398px;">gbpusd</div><div class="a" style="left:232px;top:395px;width:1px;height:18px;background:#c6c6c6;"></div><div class="t" style="left:232px;width:116px;text-align:center;top:398px;">sell</div><div class="a" style="left:348px;top:395px;width:1px;height:18px;background:#c6c6c6;"></div><div class="t" style="right:1218px;top:398px;">1.0</div><div class="a" style="left:464px;top:395px;width:1px;height:18px;background:#c6c6c6;"></div><div class="t" style="right:1017px;top:398px;">2001.11.13 23:59</div><div class="a" style="left:665px;top:395px;width:1px;height:18px;background:#c6c6c6;"></div><div class="t" style="right:901px;top:398px;">1.4410</div><div class="a" style="left:781px;top:395px;width:1px;height:18px;background:#c6c6c6;"></div><div class="t" style="right:785px;top:398px;">1.4710</div><div class="a" style="left:897px;top:395px;width:1px;height:18px;background:#c6c6c6;"></div><div class="t" style="right:669px;top:398px;">1.4110</div><div class="a" style="left:1013px;top:395px;width:1px;height:18px;background:#c6c6c6;"></div><div class="t" style="right:468px;top:398px;">2001.11.19 17:13</div><div class="a" style="left:1214px;top:395px;width:1px;height:18px;background:#c6c6c6;"></div><div class="t" style="right:352px;top:398px;">1.4110</div><div class="a" style="left:1330px;top:395px;width:1px;height:18px;background:#c6c6c6;"></div><div class="t" style="right:236px;top:398px;">-22.05</div><div class="a" style="left:1446px;top:395px;width:1px;height:18px;background:#c6c6c6;"></div><div class="t" style="right:120px;top:398px;">300</div><div class="a" style="left:1562px;top:395px;width:1px;height:18px;background:#c6c6c6;"></div><div class="t" style="right:3px;top:398px;">2077.95</div><div class="a" style="left:1px;top:414px;width:1678px;height:19px;background:#ffffff;"></div><div class="a" style="left:781px;top:413px;width:116px;height:19px;background:#f9a1a1;"></div><div class="a" style="left:1px;top:432px;width:1678px;height:1px;background:#c6c6c6;"></div><div class="t" style="left:2px;top:417px;">206245</div><div class="a" style="left:116px;top:414px;width:1px;height:18px;background:#c6c6c6;"></div><div class="t" style="left:116px;width:116px;text-align:center;top:417px;">gbpusd</div><div class="a" style="left:232px;top:414px;width:1px;height:18px;background:#c6c6c6;"></div><div class="t" style="left:232px;width:116px;text-align:center;top:417px;">sell</div><div class="a" style="left:348px;top:414px;width:1px;height:18px;background:#c6c6c6;"></div><div class="t" style="right:1218px;top:417px;">1.0</div><div class="a" style="left:464px;top:414px;width:1px;height:18px;background:#c6c6c6;"></div><div class="t" style="right:1017px;top:417px;">2002.01.25 22:00</div><div class="a" style="left:665px;top:414px;width:1px;height:18px;background:#c6c6c6;"></div><div class="t" style="right:901px;top:417px;">1.4094</div><div class="a" style="left:781px;top:414px;width:1px;height:18px;background:#c6c6c6;"></div><div class="t" style="right:785px;top:417px;">1.4394</div><div class="a" style="left:897px;top:414px;width:1px;height:18px;background:#c6c6c6;"></div><div class="t" style="right:669px;top:417px;">1.3794</div><div class="a" style="left:1013px;top:414px;width:1px;height:18px;background:#c6c6c6;"></div><div class="t" style="right:468px;top:417px;">2002.04.01 16:37</div><div class="a" style="left:1214px;top:414px;width:1px;height:18px;background:#c6c6c6;"></div><div class="t" style="right:352px;top:417px;">1.4394</div><div class="a" style="left:1330px;top:414px;width:1px;height:18px;background:#c6c6c6;"></div><div class="t" style="right:236px;top:417px;">-235.20</div><div class="a" style="left:1446px;top:414px;width:1px;height:18px;background:#c6c6c6;"></div><div class="t" style="right:120px;top:417px;">-300</div><div class="a" style="left:1562px;top:414px;width:1px;height:18px;background:#c6c6c6;"></div><div class="t" style="right:3px;top:417px;">-2335.20</div><div class="a" style="left:1px;top:433px;width:1678px;height:19px;background:#ebebeb;"></div><div class="a" style="left:897px;top:432px;width:116px;height:19px;background:#64ec64;"></div><div class="a" style="left:1px;top:451px;width:1678px;height:1px;background:#c6c6c6;"></div><div class="t" style="left:2px;top:436px;">206246</div><div class="a" style="left:116px;top:433px;width:1px;height:18px;background:#c6c6c6;"></div><div class="t" style="left:116px;width:116px;text-align:center;top:436px;">gbpusd</div><div class="a" style="left:232px;top:433px;width:1px;height:18px;background:#c6c6c6;"></div><div class="t" style="left:232px;width:116px;text-align:center;top:436px;">buy</div><div class="a" style="left:348px;top:433px;width:1px;height:18px;background:#c6c6c6;"></div><div class="t" style="right:1218px;top:436px;">1.0</div><div class="a" style="left:464px;top:433px;width:1px;height:18px;background:#c6c6c6;"></div><div class="t" style="right:1017px;top:436px;">2002.04.01 23:59</div><div class="a" style="left:665px;top:433px;width:1px;height:18px;background:#c6c6c6;"></div><div class="t" style="right:901px;top:436px;">1.4404</div><div class="a" style="left:781px;top:433px;width:1px;height:18px;background:#c6c6c6;"></div><div class="t" style="right:785px;top:436px;">1.4104</div><div class="a" style="left:897px;top:433px;width:1px;height:18px;background:#c6c6c6;"></div><div class="t" style="right:669px;top:436px;">1.4704</div><div class="a" style="left:1013px;top:433px;width:1px;height:18px;background:#c6c6c6;"></div><div class="t" style="right:468px;top:436px;">2002.06.11 18:44</div><div class="a" style="left:1214px;top:433px;width:1px;height:18px;background:#c6c6c6;"></div><div class="t" style="right:352px;top:436px;">1.4704</div><div class="a" style="left:1330px;top:433px;width:1px;height:18px;background:#c6c6c6;"></div><div class="t" style="right:236px;top:436px;">111.83</div><div class="a" style="left:1446px;top:433px;width:1px;height:18px;background:#c6c6c6;"></div><div class="t" style="right:120px;top:436px;">300</div><div class="a" style="left:1562px;top:433px;width:1px;height:18px;background:#c6c6c6;"></div><div class="t" style="right:3px;top:436px;">2211.83</div><div class="a" style="left:1px;top:452px;width:1678px;height:19px;background:#ffffff;"></div><div class="a" style="left:897px;top:451px;width:116px;height:19px;background:#64ec64;"></div><div class="a" style="left:1px;top:470px;width:1678px;height:1px;background:#c6c6c6;"></div><div class="t" style="left:2px;top:455px;">206247</div><div class="a" style="left:116px;top:452px;width:1px;height:18px;background:#c6c6c6;"></div><div class="t" style="left:116px;width:116px;text-align:center;top:455px;">gbpusd</div><div class="a" style="left:232px;top:452px;width:1px;height:18px;background:#c6c6c6;"></div><div class="t" style="left:232px;width:116px;text-align:center;top:455px;">buy</div><div class="a" style="left:348px;top:452px;width:1px;height:18px;background:#c6c6c6;"></div><div class="t" style="right:1218px;top:455px;">1.0</div><div class="a" style="left:464px;top:452px;width:1px;height:18px;background:#c6c6c6;"></div><div class="t" style="right:1017px;top:455px;">2002.05.16 23:58</div><div class="a" style="left:665px;top:452px;width:1px;height:18px;background:#c6c6c6;"></div><div class="t" style="right:901px;top:455px;">1.4562</div><div class="a" style="left:781px;top:452px;width:1px;height:18px;background:#c6c6c6;"></div><div class="t" style="right:785px;top:455px;">1.4262</div><div class="a" style="left:897px;top:452px;width:1px;height:18px;background:#c6c6c6;"></div><div class="t" style="right:669px;top:455px;">1.4862</div><div class="a" style="left:1013px;top:452px;width:1px;height:18px;background:#c6c6c6;"></div><div class="t" style="right:468px;top:455px;">2002.06.18 16:09</div><div class="a" style="left:1214px;top:452px;width:1px;height:18px;background:#c6c6c6;"></div><div class="t" style="right:352px;top:455px;">1.4862</div><div class="a" style="left:1330px;top:452px;width:1px;height:18px;background:#c6c6c6;"></div><div class="t" style="right:236px;top:455px;">48.83</div><div class="a" style="left:1446px;top:452px;width:1px;height:18px;background:#c6c6c6;"></div><div class="t" style="right:120px;top:455px;">300</div><div class="a" style="left:1562px;top:452px;width:1px;height:18px;background:#c6c6c6;"></div><div class="t" style="right:3px;top:455px;">2148.83</div><div class="a" style="left:1px;top:471px;width:1678px;height:19px;background:#ebebeb;"></div><div class="a" style="left:897px;top:470px;width:116px;height:19px;background:#64ec64;"></div><div class="a" style="left:1px;top:489px;width:1678px;height:1px;background:#c6c6c6;"></div><div class="t" style="left:2px;top:474px;">206248</div><div class="a" style="left:116px;top:471px;width:1px;height:18px;background:#c6c6c6;"></div><div class="t" style="left:116px;width:116px;text-align:center;top:474px;">gbpusd</div><div class="a" style="left:232px;top:471px;width:1px;height:18px;background:#c6c6c6;"></div><div class="t" style="left:232px;width:116px;text-align:center;top:474px;">buy</div><div class="a" style="left:348px;top:471px;width:1px;height:18px;background:#c6c6c6;"></div><div class="t" style="right:1218px;top:474px;">1.0</div><div class="a" style="left:464px;top:471px;width:1px;height:18px;background:#c6c6c6;"></div><div class="t" style="right:1017px;top:474px;">2002.06.26 23:59</div><div class="a" style="left:665px;top:471px;width:1px;height:18px;background:#c6c6c6;"></div><div class="t" style="right:901px;top:474px;">1.5259</div><div class="a" style="left:781px;top:471px;width:1px;height:18px;background:#c6c6c6;"></div><div class="t" style="right:785px;top:474px;">1.4959</div><div class="a" style="left:897px;top:471px;width:1px;height:18px;background:#c6c6c6;"></div><div class="t" style="right:669px;top:474px;">1.5559</div><div class="a" style="left:1013px;top:471px;width:1px;height:18px;background:#c6c6c6;"></div><div class="t" style="right:468px;top:474px;">2002.07.11 17:49</div><div class="a" style="left:1214px;top:471px;width:1px;height:18px;background:#c6c6c6;"></div><div class="t" style="right:352px;top:474px;">1.5559</div><div class="a" style="left:1330px;top:471px;width:1px;height:18px;background:#c6c6c6;"></div><div class="t" style="right:236px;top:474px;">26.77</div><div class="a" style="left:1446px;top:471px;width:1px;height:18px;background:#c6c6c6;"></div><div class="t" style="right:120px;top:474px;">300</div><div class="a" style="left:1562px;top:471px;width:1px;height:18px;background:#c6c6c6;"></div><div class="t" style="right:3px;top:474px;">2126.78</div><div class="a" style="left:1px;top:490px;width:1678px;height:19px;background:#ffffff;"></div><div class="a" style="left:781px;top:489px;width:116px;height:19px;background:#f9a1a1;"></div><div class="a" style="left:1px;top:508px;width:1678px;height:1px;background:#c6c6c6;"></div><div class="t" style="left:2px;top:493px;">206250</div><div class="a" style="left:116px;top:490px;width:1px;height:18px;background:#c6c6c6;"></div><div class="t" style="left:116px;width:116px;text-align:center;top:493px;">gbpusd</div><div class="a" style="left:232px;top:490px;width:1px;height:18px;background:#c6c6c6;"></div><div class="t" style="left:232px;width:116px;text-align:center;top:493px;">buy</div><div class="a" style="left:348px;top:490px;width:1px;height:18px;background:#c6c6c6;"></div><div class="t" style="right:1218px;top:493px;">1.0</div><div class="a" style="left:464px;top:490px;width:1px;height:18px;background:#c6c6c6;"></div><div class="t" style="right:1017px;top:493px;">2002.11.07 23:59</div><div class="a" style="left:665px;top:490px;width:1px;height:18px;background:#c6c6c6;"></div><div class="t" style="right:901px;top:493px;">1.5798</div><div class="a" style="left:781px;top:490px;width:1px;height:18px;background:#c6c6c6;"></div><div class="t" style="right:785px;top:493px;">1.5498</div><div class="a" style="left:897px;top:490px;width:1px;height:18px;background:#c6c6c6;"></div><div class="t" style="right:669px;top:493px;">1.6098</div><div class="a" style="left:1013px;top:490px;width:1px;height:18px;background:#c6c6c6;"></div><div class="t" style="right:468px;top:493px;">2002.11.26 18:00</div><div class="a" style="left:1214px;top:490px;width:1px;height:18px;background:#c6c6c6;"></div><div class="t" style="right:352px;top:493px;">1.5498</div><div class="a" style="left:1330px;top:490px;width:1px;height:18px;background:#c6c6c6;"></div><div class="t" style="right:236px;top:493px;">26.77</div><div class="a" style="left:1446px;top:490px;width:1px;height:18px;background:#c6c6c6;"></div><div class="t" style="right:120px;top:493px;">-300</div><div class="a" style="left:1562px;top:490px;width:1px;height:18px;background:#c6c6c6;"></div><div class="t" style="right:3px;top:493px;">-2073.22</div><div class="a" style="left:1px;top:509px;width:1678px;height:19px;background:#ebebeb;"></div><div class="a" style="left:897px;top:508px;width:116px;height:19px;background:#64ec64;"></div><div class="a" style="left:1px;top:527px;width:1678px;height:1px;background:#c6c6c6;"></div><div class="t" style="left:2px;top:512px;">206251</div><div class="a" style="left:116px;top:509px;width:1px;height:18px;background:#c6c6c6;"></div><div class="t" style="left:116px;width:116px;text-align:center;top:512px;">gbpusd</div><div class="a" style="left:232px;top:509px;width:1px;height:18px;background:#c6c6c6;"></div><div class="t" style="left:232px;width:116px;text-align:center;top:512px;">buy</div><div class="a" style="left:348px;top:509px;width:1px;height:18px;background:#c6c6c6;"></div><div class="t" style="right:1218px;top:512px;">1.0</div><div class="a" style="left:464px;top:509px;width:1px;height:18px;background:#c6c6c6;"></div><div class="t" style="right:1017px;top:512px;">2003.01.03 21:59</div><div class="a" style="left:665px;top:509px;width:1px;height:18px;background:#c6c6c6;"></div><div class="t" style="right:901px;top:512px;">1.6091</div><div class="a" style="left:781px;top:509px;width:1px;height:18px;background:#c6c6c6;"></div><div class="t" style="right:785px;top:512px;">1.5791</div><div class="a" style="left:897px;top:509px;width:1px;height:18px;background:#c6c6c6;"></div><div class="t" style="right:669px;top:512px;">1.6391</div><div class="a" style="left:1013px;top:509px;width:1px;height:18px;background:#c6c6c6;"></div><div class="t" style="right:468px;top:512px;">2003.01.27 12:08</div><div class="a" style="left:1214px;top:509px;width:1px;height:18px;background:#c6c6c6;"></div><div class="t" style="right:352px;top:512px;">1.6391</div><div class="a" style="left:1330px;top:509px;width:1px;height:18px;background:#c6c6c6;"></div><div class="t" style="right:236px;top:512px;">34.65</div><div class="a" style="left:1446px;top:509px;width:1px;height:18px;background:#c6c6c6;"></div><div class="t" style="right:120px;top:512px;">300</div><div class="a" style="left:1562px;top:509px;width:1px;height:18px;background:#c6c6c6;"></div><div class="t" style="right:3px;top:512px;">2134.65</div><div class="a" style="left:1px;top:528px;width:1678px;height:19px;background:#ffffff;"></div><div class="a" style="left:897px;top:527px;width:116px;height:19px;background:#64ec64;"></div><div class="a" style="left:1px;top:546px;width:1678px;height:1px;background:#c6c6c6;"></div><div class="t" style="left:2px;top:531px;">206252</div><div class="a" style="left:116px;top:528px;width:1px;height:18px;background:#c6c6c6;"></div><div class="t" style="left:116px;width:116px;text-align:center;top:531px;">gbpusd</div><div class="a" style="left:232px;top:528px;width:1px;height:18px;background:#c6c6c6;"></div><div class="t" style="left:232px;width:116px;text-align:center;top:531px;">sell</div><div class="a" style="left:348px;top:528px;width:1px;height:18px;background:#c6c6c6;"></div><div class="t" style="right:1218px;top:531px;">1.0</div><div class="a" style="left:464px;top:528px;width:1px;height:18px;background:#c6c6c6;"></div><div class="t" style="right:1017px;top:531px;">2003.03.14 21:55</div><div class="a" style="left:665px;top:528px;width:1px;height:18px;background:#c6c6c6;"></div><div class="t" style="right:901px;top:531px;">1.5829</div><div class="a" style="left:781px;top:528px;width:1px;height:18px;background:#c6c6c6;"></div><div class="t" style="right:785px;top:531px;">1.6129</div><div class="a" style="left:897px;top:528px;width:1px;height:18px;background:#c6c6c6;"></div><div class="t" style="right:669px;top:531px;">1.5529</div><div class="a" style="left:1013px;top:528px;width:1px;height:18px;background:#c6c6c6;"></div><div class="t" style="right:468px;top:531px;">2003.04.07 08:53</div><div class="a" style="left:1214px;top:528px;width:1px;height:18px;background:#c6c6c6;"></div><div class="t" style="right:352px;top:531px;">1.5529</div><div class="a" style="left:1330px;top:528px;width:1px;height:18px;background:#c6c6c6;"></div><div class="t" style="right:236px;top:531px;">-80.85</div><div class="a" style="left:1446px;top:528px;width:1px;height:18px;background:#c6c6c6;"></div><div class="t" style="right:120px;top:531px;">300</div><div class="a" style="left:1562px;top:528px;width:1px;height:18px;background:#c6c6c6;"></div><div class="t" style="right:3px;top:531px;">2019.15</div><div class="a" style="left:1px;top:547px;width:1678px;height:19px;background:#ebebeb;"></div><div class="a" style="left:781px;top:546px;width:116px;height:19px;background:#f9a1a1;"></div><div class="a" style="left:1px;top:565px;width:1678px;height:1px;background:#c6c6c6;"></div><div class="t" style="left:2px;top:550px;">206253</div><div class="a" style="left:116px;top:547px;width:1px;height:18px;background:#c6c6c6;"></div><div class="t" style="left:116px;width:116px;text-align:center;top:550px;">gbpusd</div><div class="a" style="left:232px;top:547px;width:1px;height:18px;background:#c6c6c6;"></div><div class="t" style="left:232px;width:116px;text-align:center;top:550px;">buy</div><div class="a" style="left:348px;top:547px;width:1px;height:18px;background:#c6c6c6;"></div><div class="t" style="right:1218px;top:550px;">1.0</div><div class="a" style="left:464px;top:547px;width:1px;height:18px;background:#c6c6c6;"></div><div class="t" style="right:1017px;top:550px;">2003.05.29 23:59</div><div class="a" style="left:665px;top:547px;width:1px;height:18px;background:#c6c6c6;"></div><div class="t" style="right:901px;top:550px;">1.6542</div><div class="a" style="left:781px;top:547px;width:1px;height:18px;background:#c6c6c6;"></div><div class="t" style="right:785px;top:550px;">1.6242</div><div class="a" style="left:897px;top:547px;width:1px;height:18px;background:#c6c6c6;"></div><div class="t" style="right:669px;top:550px;">1.6842</div><div class="a" style="left:1013px;top:547px;width:1px;height:18px;background:#c6c6c6;"></div><div class="t" style="right:468px;top:550px;">2003.06.03 19:01</div><div class="a" style="left:1214px;top:547px;width:1px;height:18px;background:#c6c6c6;"></div><div class="t" style="right:352px;top:550px;">1.6242</div><div class="a" style="left:1330px;top:547px;width:1px;height:18px;background:#c6c6c6;"></div><div class="t" style="right:236px;top:550px;">4.73</div><div class="a" style="left:1446px;top:547px;width:1px;height:18px;background:#c6c6c6;"></div><div class="t" style="right:120px;top:550px;">-300</div><div class="a" style="left:1562px;top:547px;width:1px;height:18px;background:#c6c6c6;"></div><div class="t" style="right:3px;top:550px;">-2095.27</div><div class="a" style="left:1px;top:566px;width:1678px;height:19px;background:#ffffff;"></div><div class="a" style="left:1px;top:584px;width:1678px;height:1px;background:#c6c6c6;"></div><div class="t" style="left:2px;top:569px;">206255</div><div class="a" style="left:116px;top:566px;width:1px;height:18px;background:#c6c6c6;"></div><div class="t" style="left:116px;width:116px;text-align:center;top:569px;">gbpusd</div><div class="a" style="left:232px;top:566px;width:1px;height:18px;background:#c6c6c6;"></div><div class="t" style="left:232px;width:116px;text-align:center;top:569px;">buy</div><div class="a" style="left:348px;top:566px;width:1px;height:18px;background:#c6c6c6;"></div><div class="t" style="right:1218px;top:569px;">1.0</div><div class="a" style="left:464px;top:566px;width:1px;height:18px;background:#c6c6c6;"></div><div class="t" style="right:1017px;top:569px;">2003.06.05 23:59</div><div class="a" style="left:665px;top:566px;width:1px;height:18px;background:#c6c6c6;"></div><div class="t" style="right:901px;top:569px;">1.6606</div><div class="a" style="left:781px;top:566px;width:1px;height:18px;background:#c6c6c6;"></div><div class="t" style="right:785px;top:569px;">1.6306</div><div class="a" style="left:897px;top:566px;width:1px;height:18px;background:#c6c6c6;"></div><div class="t" style="right:669px;top:569px;">1.6906</div><div class="a" style="left:1013px;top:566px;width:1px;height:18px;background:#c6c6c6;"></div><div class="t" style="right:468px;top:569px;">2003.07.07 23:58</div><div class="a" style="left:1214px;top:566px;width:1px;height:18px;background:#c6c6c6;"></div><div class="t" style="right:352px;top:569px;">1.6483</div><div class="a" style="left:1330px;top:566px;width:1px;height:18px;background:#c6c6c6;"></div><div class="t" style="right:236px;top:569px;">47.25</div><div class="a" style="left:1446px;top:566px;width:1px;height:18px;background:#c6c6c6;"></div><div class="t" style="right:120px;top:569px;">-123</div><div class="a" style="left:1562px;top:566px;width:1px;height:18px;background:#c6c6c6;"></div><div class="t" style="right:3px;top:569px;">-813.75</div><div class="a" style="left:1px;top:585px;width:1678px;height:19px;background:#ebebeb;"></div><div class="a" style="left:897px;top:584px;width:116px;height:19px;background:#64ec64;"></div><div class="a" style="left:1px;top:603px;width:1678px;height:1px;background:#c6c6c6;"></div><div class="t" style="left:2px;top:588px;">206256</div><div class="a" style="left:116px;top:585px;width:1px;height:18px;background:#c6c6c6;"></div><div class="t" style="left:116px;width:116px;text-align:center;top:588px;">gbpusd</div><div class="a" style="left:232px;top:585px;width:1px;height:18px;background:#c6c6c6;"></div><div class="t" style="left:232px;width:116px;text-align:center;top:588px;">sell</div><div class="a" style="left:348px;top:585px;width:1px;height:18px;background:#c6c6c6;"></div><div class="t" style="right:1218px;top:588px;">1.0</div><div class="a" style="left:464px;top:585px;width:1px;height:18px;background:#c6c6c6;"></div><div class="t" style="right:1017px;top:588px;">2003.07.14 23:59</div><div class="a" style="left:665px;top:585px;width:1px;height:18px;background:#c6c6c6;"></div><div class="t" style="right:901px;top:588px;">1.6093</div><div class="a" style="left:781px;top:585px;width:1px;height:18px;background:#c6c6c6;"></div><div class="t" style="right:785px;top:588px;">1.6393</div><div class="a" style="left:897px;top:585px;width:1px;height:18px;background:#c6c6c6;"></div><div class="t" style="right:669px;top:588px;">1.5793</div><div class="a" style="left:1013px;top:585px;width:1px;height:18px;background:#c6c6c6;"></div><div class="t" style="right:468px;top:588px;">2003.07.21 00:35</div><div class="a" style="left:1214px;top:585px;width:1px;height:18px;background:#c6c6c6;"></div><div class="t" style="right:352px;top:588px;">1.5793</div><div class="a" style="left:1330px;top:585px;width:1px;height:18px;background:#c6c6c6;"></div><div class="t" style="right:236px;top:588px;">-25.73</div><div class="a" style="left:1446px;top:585px;width:1px;height:18px;background:#c6c6c6;"></div><div class="t" style="right:120px;top:588px;">300</div><div class="a" style="left:1562px;top:585px;width:1px;height:18px;background:#c6c6c6;"></div><div class="t" style="right:3px;top:588px;">2074.28</div><div class="a" style="left:1px;top:604px;width:1678px;height:19px;background:#ffff00;"></div><div class="a" style="left:897px;top:603px;width:116px;height:19px;background:#64ec64;"></div><div class="a" style="left:1px;top:622px;width:1678px;height:1px;background:#c6c6c6;"></div><div class="t" style="left:2px;top:607px;">206257</div><div class="a" style="left:116px;top:604px;width:1px;height:18px;background:#c6c6c6;"></div><div class="t" style="left:116px;width:116px;text-align:center;top:607px;">gbpusd</div><div class="a" style="left:232px;top:604px;width:1px;height:18px;background:#c6c6c6;"></div><div class="t" style="left:232px;width:116px;text-align:center;top:607px;">buy</div><div class="a" style="left:348px;top:604px;width:1px;height:18px;background:#c6c6c6;"></div><div class="t" style="right:1218px;top:607px;">1.0</div><div class="a" style="left:464px;top:604px;width:1px;height:18px;background:#c6c6c6;"></div><div class="t" style="right:1017px;top:607px;">2003.09.17 23:56</div><div class="a" style="left:665px;top:604px;width:1px;height:18px;background:#c6c6c6;"></div><div class="t" style="right:901px;top:607px;">1.6096</div><div class="a" style="left:781px;top:604px;width:1px;height:18px;background:#c6c6c6;"></div><div class="t" style="right:785px;top:607px;">1.5796</div><div class="a" style="left:897px;top:604px;width:1px;height:18px;background:#c6c6c6;"></div><div class="t" style="right:669px;top:607px;">1.6396</div><div class="a" style="left:1013px;top:604px;width:1px;height:18px;background:#c6c6c6;"></div><div class="t" style="right:468px;top:607px;">2003.09.22 00:01</div><div class="a" style="left:1214px;top:604px;width:1px;height:18px;background:#c6c6c6;"></div><div class="t" style="right:352px;top:607px;">1.6396</div><div class="a" style="left:1330px;top:604px;width:1px;height:18px;background:#c6c6c6;"></div><div class="t" style="right:236px;top:607px;">7.88</div><div class="a" style="left:1446px;top:604px;width:1px;height:18px;background:#c6c6c6;"></div><div class="t" style="right:120px;top:607px;">300</div><div class="a" style="left:1562px;top:604px;width:1px;height:18px;background:#c6c6c6;"></div><div class="t" style="right:3px;top:607px;">2107.87</div><div class="a" style="left:1px;top:623px;width:1678px;height:19px;background:#ebebeb;"></div><div class="a" style="left:1px;top:641px;width:1678px;height:1px;background:#c6c6c6;"></div><div class="t" style="left:2px;top:626px;">206258</div><div class="a" style="left:116px;top:623px;width:1px;height:18px;background:#c6c6c6;"></div><div class="t" style="left:116px;width:116px;text-align:center;top:626px;">gbpusd</div><div class="a" style="left:232px;top:623px;width:1px;height:18px;background:#c6c6c6;"></div><div class="t" style="left:232px;width:116px;text-align:center;top:626px;">buy</div><div class="a" style="left:348px;top:623px;width:1px;height:18px;background:#c6c6c6;"></div><div class="t" style="right:1218px;top:626px;">1.0</div><div class="a" style="left:464px;top:623px;width:1px;height:18px;background:#c6c6c6;"></div><div class="t" style="right:1017px;top:626px;">2003.10.22 23:58</div><div class="a" style="left:665px;top:623px;width:1px;height:18px;background:#c6c6c6;"></div><div class="t" style="right:901px;top:626px;">1.6927</div><div class="a" style="left:781px;top:623px;width:1px;height:18px;background:#c6c6c6;"></div><div class="t" style="right:785px;top:626px;">1.6627</div><div class="a" style="left:897px;top:623px;width:1px;height:18px;background:#c6c6c6;"></div><div class="t" style="right:669px;top:626px;">1.7227</div><div class="a" style="left:1013px;top:623px;width:1px;height:18px;background:#c6c6c6;"></div><div class="t" style="right:468px;top:626px;">2003.11.03 23:56</div><div class="a" style="left:1214px;top:623px;width:1px;height:18px;background:#c6c6c6;"></div><div class="t" style="right:352px;top:626px;">1.6764</div><div class="a" style="left:1330px;top:623px;width:1px;height:18px;background:#c6c6c6;"></div><div class="t" style="right:236px;top:626px;">18.90</div><div class="a" style="left:1446px;top:623px;width:1px;height:18px;background:#c6c6c6;"></div><div class="t" style="right:120px;top:626px;">-163</div><div class="a" style="left:1562px;top:623px;width:1px;height:18px;background:#c6c6c6;"></div><div class="t" style="right:3px;top:626px;">-1122.10</div><div class="a" style="left:1px;top:642px;width:1678px;height:19px;background:#ffffff;"></div><div class="a" style="left:897px;top:641px;width:116px;height:19px;background:#64ec64;"></div><div class="a" style="left:1px;top:660px;width:1678px;height:1px;background:#c6c6c6;"></div><div class="t" style="left:2px;top:645px;">206259</div><div class="a" style="left:116px;top:642px;width:1px;height:18px;background:#c6c6c6;"></div><div class="t" style="left:116px;width:116px;text-align:center;top:645px;">gbpusd</div><div class="a" style="left:232px;top:642px;width:1px;height:18px;background:#c6c6c6;"></div><div class="t" style="left:232px;width:116px;text-align:center;top:645px;">sell</div><div class="a" style="left:348px;top:642px;width:1px;height:18px;background:#c6c6c6;"></div><div class="t" style="right:1218px;top:645px;">1.0</div><div class="a" style="left:464px;top:642px;width:1px;height:18px;background:#c6c6c6;"></div><div class="t" style="right:1017px;top:645px;">2004.04.14 23:59</div><div class="a" style="left:665px;top:642px;width:1px;height:18px;background:#c6c6c6;"></div><div class="t" style="right:901px;top:645px;">1.7896</div><div class="a" style="left:781px;top:642px;width:1px;height:18px;background:#c6c6c6;"></div><div class="t" style="right:785px;top:645px;">1.8196</div><div class="a" style="left:897px;top:642px;width:1px;height:18px;background:#c6c6c6;"></div><div class="t" style="right:669px;top:645px;">1.7596</div><div class="a" style="left:1013px;top:642px;width:1px;height:18px;background:#c6c6c6;"></div><div class="t" style="right:468px;top:645px;">2004.04.29 12:52</div><div class="a" style="left:1214px;top:642px;width:1px;height:18px;background:#c6c6c6;"></div><div class="t" style="right:352px;top:645px;">1.7596</div><div class="a" style="left:1330px;top:642px;width:1px;height:18px;background:#c6c6c6;"></div><div class="t" style="right:236px;top:645px;">-62.47</div><div class="a" style="left:1446px;top:642px;width:1px;height:18px;background:#c6c6c6;"></div><div class="t" style="right:120px;top:645px;">300</div><div class="a" style="left:1562px;top:642px;width:1px;height:18px;background:#c6c6c6;"></div><div class="t" style="right:3px;top:645px;">2037.53</div><div class="a" style="left:1px;top:661px;width:1678px;height:19px;background:#ebebeb;"></div><div class="a" style="left:781px;top:660px;width:116px;height:19px;background:#f9a1a1;"></div><div class="a" style="left:1px;top:679px;width:1678px;height:1px;background:#c6c6c6;"></div><div class="t" style="left:2px;top:664px;">206261</div><div class="a" style="left:116px;top:661px;width:1px;height:18px;background:#c6c6c6;"></div><div class="t" style="left:116px;width:116px;text-align:center;top:664px;">gbpusd</div><div class="a" style="left:232px;top:661px;width:1px;height:18px;background:#c6c6c6;"></div><div class="t" style="left:232px;width:116px;text-align:center;top:664px;">sell</div><div class="a" style="left:348px;top:661px;width:1px;height:18px;background:#c6c6c6;"></div><div class="t" style="right:1218px;top:664px;">1.0</div><div class="a" style="left:464px;top:661px;width:1px;height:18px;background:#c6c6c6;"></div><div class="t" style="right:1017px;top:664px;">2004.09.15 23:59</div><div class="a" style="left:665px;top:661px;width:1px;height:18px;background:#c6c6c6;"></div><div class="t" style="right:901px;top:664px;">1.7762</div><div class="a" style="left:781px;top:661px;width:1px;height:18px;background:#c6c6c6;"></div><div class="t" style="right:785px;top:664px;">1.8062</div><div class="a" style="left:897px;top:661px;width:1px;height:18px;background:#c6c6c6;"></div><div class="t" style="right:669px;top:664px;">1.7462</div><div class="a" style="left:1013px;top:661px;width:1px;height:18px;background:#c6c6c6;"></div><div class="t" style="right:468px;top:664px;">2004.09.24 14:34</div><div class="a" style="left:1214px;top:661px;width:1px;height:18px;background:#c6c6c6;"></div><div class="t" style="right:352px;top:664px;">1.8062</div><div class="a" style="left:1330px;top:661px;width:1px;height:18px;background:#c6c6c6;"></div><div class="t" style="right:236px;top:664px;">-40.42</div><div class="a" style="left:1446px;top:661px;width:1px;height:18px;background:#c6c6c6;"></div><div class="t" style="right:120px;top:664px;">-300</div><div class="a" style="left:1562px;top:661px;width:1px;height:18px;background:#c6c6c6;"></div><div class="t" style="right:3px;top:664px;">-2140.43</div><div class="a" style="left:1px;top:680px;width:1678px;height:19px;background:#ffffff;"></div><div class="a" style="left:897px;top:679px;width:116px;height:19px;background:#64ec64;"></div><div class="a" style="left:1px;top:698px;width:1678px;height:1px;background:#c6c6c6;"></div><div class="t" style="left:2px;top:683px;">206262</div><div class="a" style="left:116px;top:680px;width:1px;height:18px;background:#c6c6c6;"></div><div class="t" style="left:116px;width:116px;text-align:center;top:683px;">gbpusd</div><div class="a" style="left:232px;top:680px;width:1px;height:18px;background:#c6c6c6;"></div><div class="t" style="left:232px;width:116px;text-align:center;top:683px;">sell</div><div class="a" style="left:348px;top:680px;width:1px;height:18px;background:#c6c6c6;"></div><div class="t" style="right:1218px;top:683px;">1.0</div><div class="a" style="left:464px;top:680px;width:1px;height:18px;background:#c6c6c6;"></div><div class="t" style="right:1017px;top:683px;">2005.01.04 23:59</div><div class="a" style="left:665px;top:680px;width:1px;height:18px;background:#c6c6c6;"></div><div class="t" style="right:901px;top:683px;">1.8817</div><div class="a" style="left:781px;top:680px;width:1px;height:18px;background:#c6c6c6;"></div><div class="t" style="right:785px;top:683px;">1.9117</div><div class="a" style="left:897px;top:680px;width:1px;height:18px;background:#c6c6c6;"></div><div class="t" style="right:669px;top:683px;">1.8517</div><div class="a" style="left:1013px;top:680px;width:1px;height:18px;background:#c6c6c6;"></div><div class="t" style="right:468px;top:683px;">2005.02.08 12:02</div><div class="a" style="left:1214px;top:680px;width:1px;height:18px;background:#c6c6c6;"></div><div class="t" style="right:352px;top:683px;">1.8517</div><div class="a" style="left:1330px;top:680px;width:1px;height:18px;background:#c6c6c6;"></div><div class="t" style="right:236px;top:683px;">-128.62</div><div class="a" style="left:1446px;top:680px;width:1px;height:18px;background:#c6c6c6;"></div><div class="t" style="right:120px;top:683px;">300</div><div class="a" style="left:1562px;top:680px;width:1px;height:18px;background:#c6c6c6;"></div><div class="t" style="right:3px;top:683px;">1971.38</div><div class="a" style="left:1px;top:699px;width:1678px;height:19px;background:#ebebeb;"></div><div class="a" style="left:897px;top:698px;width:116px;height:19px;background:#64ec64;"></div><div class="a" style="left:1px;top:717px;width:1678px;height:1px;background:#c6c6c6;"></div><div class="t" style="left:2px;top:702px;">206263</div><div class="a" style="left:116px;top:699px;width:1px;height:18px;background:#c6c6c6;"></div><div class="t" style="left:116px;width:116px;text-align:center;top:702px;">gbpusd</div><div class="a" style="left:232px;top:699px;width:1px;height:18px;background:#c6c6c6;"></div><div class="t" style="left:232px;width:116px;text-align:center;top:702px;">sell</div><div class="a" style="left:348px;top:699px;width:1px;height:18px;background:#c6c6c6;"></div><div class="t" style="right:1218px;top:702px;">1.0</div><div class="a" style="left:464px;top:699px;width:1px;height:18px;background:#c6c6c6;"></div><div class="t" style="right:1017px;top:702px;">2005.03.21 23:59</div><div class="a" style="left:665px;top:699px;width:1px;height:18px;background:#c6c6c6;"></div><div class="t" style="right:901px;top:702px;">1.8966</div><div class="a" style="left:781px;top:699px;width:1px;height:18px;background:#c6c6c6;"></div><div class="t" style="right:785px;top:702px;">1.9266</div><div class="a" style="left:897px;top:699px;width:1px;height:18px;background:#c6c6c6;"></div><div class="t" style="right:669px;top:702px;">1.8666</div><div class="a" style="left:1013px;top:699px;width:1px;height:18px;background:#c6c6c6;"></div><div class="t" style="right:468px;top:702px;">2005.03.23 20:51</div><div class="a" style="left:1214px;top:699px;width:1px;height:18px;background:#c6c6c6;"></div><div class="t" style="right:352px;top:702px;">1.8666</div><div class="a" style="left:1330px;top:699px;width:1px;height:18px;background:#c6c6c6;"></div><div class="t" style="right:236px;top:702px;">-7.35</div><div class="a" style="left:1446px;top:699px;width:1px;height:18px;background:#c6c6c6;"></div><div class="t" style="right:120px;top:702px;">300</div><div class="a" style="left:1562px;top:699px;width:1px;height:18px;background:#c6c6c6;"></div><div class="t" style="right:3px;top:702px;">2092.65</div><div class="a" style="left:1px;top:718px;width:1678px;height:19px;background:#ffffff;"></div><div class="a" style="left:781px;top:717px;width:116px;height:19px;background:#f9a1a1;"></div><div class="a" style="left:1px;top:736px;width:1678px;height:1px;background:#c6c6c6;"></div><div class="t" style="left:2px;top:721px;">206264</div><div class="a" style="left:116px;top:718px;width:1px;height:18px;background:#c6c6c6;"></div><div class="t" style="left:116px;width:116px;text-align:center;top:721px;">gbpusd</div><div class="a" style="left:232px;top:718px;width:1px;height:18px;background:#c6c6c6;"></div><div class="t" style="left:232px;width:116px;text-align:center;top:721px;">buy</div><div class="a" style="left:348px;top:718px;width:1px;height:18px;background:#c6c6c6;"></div><div class="t" style="right:1218px;top:721px;">1.0</div><div class="a" style="left:464px;top:718px;width:1px;height:18px;background:#c6c6c6;"></div><div class="t" style="right:1017px;top:721px;">2005.09.01 23:59</div><div class="a" style="left:665px;top:718px;width:1px;height:18px;background:#c6c6c6;"></div><div class="t" style="right:901px;top:721px;">1.8338</div><div class="a" style="left:781px;top:718px;width:1px;height:18px;background:#c6c6c6;"></div><div class="t" style="right:785px;top:721px;">1.8038</div><div class="a" style="left:897px;top:718px;width:1px;height:18px;background:#c6c6c6;"></div><div class="t" style="right:669px;top:721px;">1.8638</div><div class="a" style="left:1013px;top:718px;width:1px;height:18px;background:#c6c6c6;"></div><div class="t" style="right:468px;top:721px;">2005.09.15 17:00</div><div class="a" style="left:1214px;top:718px;width:1px;height:18px;background:#c6c6c6;"></div><div class="t" style="right:352px;top:721px;">1.8038</div><div class="a" style="left:1330px;top:718px;width:1px;height:18px;background:#c6c6c6;"></div><div class="t" style="right:236px;top:721px;">22.05</div><div class="a" style="left:1446px;top:718px;width:1px;height:18px;background:#c6c6c6;"></div><div class="t" style="right:120px;top:721px;">-300</div><div class="a" style="left:1562px;top:718px;width:1px;height:18px;background:#c6c6c6;"></div><div class="t" style="right:3px;top:721px;">-2077.95</div><div class="a" style="left:1px;top:737px;width:1678px;height:19px;background:#ebebeb;"></div><div class="a" style="left:897px;top:736px;width:116px;height:19px;background:#64ec64;"></div><div class="a" style="left:1px;top:755px;width:1678px;height:1px;background:#c6c6c6;"></div><div class="t" style="left:2px;top:740px;">206265</div><div class="a" style="left:116px;top:737px;width:1px;height:18px;background:#c6c6c6;"></div><div class="t" style="left:116px;width:116px;text-align:center;top:740px;">gbpusd</div><div class="a" style="left:232px;top:737px;width:1px;height:18px;background:#c6c6c6;"></div><div class="t" style="left:232px;width:116px;text-align:center;top:740px;">sell</div><div class="a" style="left:348px;top:737px;width:1px;height:18px;background:#c6c6c6;"></div><div class="t" style="right:1218px;top:740px;">1.0</div><div class="a" style="left:464px;top:737px;width:1px;height:18px;background:#c6c6c6;"></div><div class="t" style="right:1017px;top:740px;">2005.11.04 22:00</div><div class="a" style="left:665px;top:737px;width:1px;height:18px;background:#c6c6c6;"></div><div class="t" style="right:901px;top:740px;">1.7519</div><div class="a" style="left:781px;top:737px;width:1px;height:18px;background:#c6c6c6;"></div><div class="t" style="right:785px;top:740px;">1.7819</div><div class="a" style="left:897px;top:737px;width:1px;height:18px;background:#c6c6c6;"></div><div class="t" style="right:669px;top:740px;">1.7219</div><div class="a" style="left:1013px;top:737px;width:1px;height:18px;background:#c6c6c6;"></div><div class="t" style="right:468px;top:740px;">2005.11.16 15:03</div><div class="a" style="left:1214px;top:737px;width:1px;height:18px;background:#c6c6c6;"></div><div class="t" style="right:352px;top:740px;">1.7219</div><div class="a" style="left:1330px;top:737px;width:1px;height:18px;background:#c6c6c6;"></div><div class="t" style="right:236px;top:740px;">-36.75</div><div class="a" style="left:1446px;top:737px;width:1px;height:18px;background:#c6c6c6;"></div><div class="t" style="right:120px;top:740px;">300</div><div class="a" style="left:1562px;top:737px;width:1px;height:18px;background:#c6c6c6;"></div><div class="t" style="right:3px;top:740px;">2063.25</div><div class="a" style="left:1px;top:756px;width:1678px;height:19px;background:#ffffff;"></div><div class="a" style="left:781px;top:755px;width:116px;height:19px;background:#f9a1a1;"></div><div class="a" style="left:1px;top:774px;width:1678px;height:1px;background:#c6c6c6;"></div><div class="t" style="left:2px;top:759px;">206266</div><div class="a" style="left:116px;top:756px;width:1px;height:18px;background:#c6c6c6;"></div><div class="t" style="left:116px;width:116px;text-align:center;top:759px;">gbpusd</div><div class="a" style="left:232px;top:756px;width:1px;height:18px;background:#c6c6c6;"></div><div class="t" style="left:232px;width:116px;text-align:center;top:759px;">buy</div><div class="a" style="left:348px;top:756px;width:1px;height:18px;background:#c6c6c6;"></div><div class="t" style="right:1218px;top:759px;">1.0</div><div class="a" style="left:464px;top:756px;width:1px;height:18px;background:#c6c6c6;"></div><div class="t" style="right:1017px;top:759px;">2005.12.13 23:59</div><div class="a" style="left:665px;top:756px;width:1px;height:18px;background:#c6c6c6;"></div><div class="t" style="right:901px;top:759px;">1.7697</div><div class="a" style="left:781px;top:756px;width:1px;height:18px;background:#c6c6c6;"></div><div class="t" style="right:785px;top:759px;">1.7397</div><div class="a" style="left:897px;top:756px;width:1px;height:18px;background:#c6c6c6;"></div><div class="t" style="right:669px;top:759px;">1.7997</div><div class="a" style="left:1013px;top:756px;width:1px;height:18px;background:#c6c6c6;"></div><div class="t" style="right:468px;top:759px;">2005.12.21 16:52</div><div class="a" style="left:1214px;top:756px;width:1px;height:18px;background:#c6c6c6;"></div><div class="t" style="right:352px;top:759px;">1.7397</div><div class="a" style="left:1330px;top:756px;width:1px;height:18px;background:#c6c6c6;"></div><div class="t" style="right:236px;top:759px;">12.60</div><div class="a" style="left:1446px;top:756px;width:1px;height:18px;background:#c6c6c6;"></div><div class="t" style="right:120px;top:759px;">-300</div><div class="a" style="left:1562px;top:756px;width:1px;height:18px;background:#c6c6c6;"></div><div class="t" style="right:3px;top:759px;">-2087.40</div><div class="a" style="left:1px;top:775px;width:1678px;height:19px;background:#ebebeb;"></div><div class="a" style="left:781px;top:774px;width:116px;height:19px;background:#f9a1a1;"></div><div class="a" style="left:1px;top:793px;width:1678px;height:1px;background:#c6c6c6;"></div><div class="t" style="left:2px;top:778px;">206267</div><div class="a" style="left:116px;top:775px;width:1px;height:18px;background:#c6c6c6;"></div><div class="t" style="left:116px;width:116px;text-align:center;top:778px;">gbpusd</div><div class="a" style="left:232px;top:775px;width:1px;height:18px;background:#c6c6c6;"></div><div class="t" style="left:232px;width:116px;text-align:center;top:778px;">buy</div><div class="a" style="left:348px;top:775px;width:1px;height:18px;background:#c6c6c6;"></div><div class="t" style="right:1218px;top:778px;">1.0</div><div class="a" style="left:464px;top:775px;width:1px;height:18px;background:#c6c6c6;"></div><div class="t" style="right:1017px;top:778px;">2006.01.23 23:59</div><div class="a" style="left:665px;top:775px;width:1px;height:18px;background:#c6c6c6;"></div><div class="t" style="right:901px;top:778px;">1.7868</div><div class="a" style="left:781px;top:775px;width:1px;height:18px;background:#c6c6c6;"></div><div class="t" style="right:785px;top:778px;">1.7568</div><div class="a" style="left:897px;top:775px;width:1px;height:18px;background:#c6c6c6;"></div><div class="t" style="right:669px;top:778px;">1.8168</div><div class="a" style="left:1013px;top:775px;width:1px;height:18px;background:#c6c6c6;"></div><div class="t" style="right:468px;top:778px;">2006.02.06 08:35</div><div class="a" style="left:1214px;top:775px;width:1px;height:18px;background:#c6c6c6;"></div><div class="t" style="right:352px;top:778px;">1.7568</div><div class="a" style="left:1330px;top:775px;width:1px;height:18px;background:#c6c6c6;"></div><div class="t" style="right:236px;top:778px;">22.05</div><div class="a" style="left:1446px;top:775px;width:1px;height:18px;background:#c6c6c6;"></div><div class="t" style="right:120px;top:778px;">-300</div><div class="a" style="left:1562px;top:775px;width:1px;height:18px;background:#c6c6c6;"></div><div class="t" style="right:3px;top:778px;">-2077.95</div><div class="a" style="left:1px;top:794px;width:1678px;height:19px;background:#ffffff;"></div><div class="a" style="left:1px;top:812px;width:1678px;height:1px;background:#c6c6c6;"></div><div class="t" style="left:2px;top:797px;">206268</div><div class="a" style="left:116px;top:794px;width:1px;height:18px;background:#c6c6c6;"></div><div class="t" style="left:116px;width:116px;text-align:center;top:797px;">gbpusd</div><div class="a" style="left:232px;top:794px;width:1px;height:18px;background:#c6c6c6;"></div><div class="t" style="left:232px;width:116px;text-align:center;top:797px;">sell</div><div class="a" style="left:348px;top:794px;width:1px;height:18px;background:#c6c6c6;"></div><div class="t" style="right:1218px;top:797px;">1.0</div><div class="a" style="left:464px;top:794px;width:1px;height:18px;background:#c6c6c6;"></div><div class="t" style="right:1017px;top:797px;">2006.02.06 23:59</div><div class="a" style="left:665px;top:794px;width:1px;height:18px;background:#c6c6c6;"></div><div class="t" style="right:901px;top:797px;">1.7475</div><div class="a" style="left:781px;top:794px;width:1px;height:18px;background:#c6c6c6;"></div><div class="t" style="right:785px;top:797px;">1.7775</div><div class="a" style="left:897px;top:794px;width:1px;height:18px;background:#c6c6c6;"></div><div class="t" style="right:669px;top:797px;">1.7175</div><div class="a" style="left:1013px;top:794px;width:1px;height:18px;background:#c6c6c6;"></div><div class="t" style="right:468px;top:797px;">2006.03.21 23:59</div><div class="a" style="left:1214px;top:794px;width:1px;height:18px;background:#c6c6c6;"></div><div class="t" style="right:352px;top:797px;">1.7486</div><div class="a" style="left:1330px;top:794px;width:1px;height:18px;background:#c6c6c6;"></div><div class="t" style="right:236px;top:797px;">-158.03</div><div class="a" style="left:1446px;top:794px;width:1px;height:18px;background:#c6c6c6;"></div><div class="t" style="right:120px;top:797px;">-11</div><div class="a" style="left:1562px;top:794px;width:1px;height:18px;background:#c6c6c6;"></div><div class="t" style="right:3px;top:797px;">-235.02</div><div class="a" style="left:1px;top:813px;width:1678px;height:19px;background:#ebebeb;"></div><div class="a" style="left:897px;top:812px;width:116px;height:19px;background:#64ec64;"></div><div class="a" style="left:1px;top:831px;width:1678px;height:1px;background:#c6c6c6;"></div><div class="t" style="left:2px;top:816px;">206269</div><div class="a" style="left:116px;top:813px;width:1px;height:18px;background:#c6c6c6;"></div><div class="t" style="left:116px;width:116px;text-align:center;top:816px;">gbpusd</div><div class="a" style="left:232px;top:813px;width:1px;height:18px;background:#c6c6c6;"></div><div class="t" style="left:232px;width:116px;text-align:center;top:816px;">buy</div><div class="a" style="left:348px;top:813px;width:1px;height:18px;background:#c6c6c6;"></div><div class="t" style="right:1218px;top:816px;">1.0</div><div class="a" style="left:464px;top:813px;width:1px;height:18px;background:#c6c6c6;"></div><div class="t" style="right:1017px;top:816px;">2006.04.17 23:59</div><div class="a" style="left:665px;top:813px;width:1px;height:18px;background:#c6c6c6;"></div><div class="t" style="right:901px;top:816px;">1.7705</div><div class="a" style="left:781px;top:813px;width:1px;height:18px;background:#c6c6c6;"></div><div class="t" style="right:785px;top:816px;">1.7405</div><div class="a" style="left:897px;top:813px;width:1px;height:18px;background:#c6c6c6;"></div><div class="t" style="right:669px;top:816px;">1.8005</div><div class="a" style="left:1013px;top:813px;width:1px;height:18px;background:#c6c6c6;"></div><div class="t" style="right:468px;top:816px;">2006.04.27 16:44</div><div class="a" style="left:1214px;top:813px;width:1px;height:18px;background:#c6c6c6;"></div><div class="t" style="right:352px;top:816px;">1.8005</div><div class="a" style="left:1330px;top:813px;width:1px;height:18px;background:#c6c6c6;"></div><div class="t" style="right:236px;top:816px;">18.90</div><div class="a" style="left:1446px;top:813px;width:1px;height:18px;background:#c6c6c6;"></div><div class="t" style="right:120px;top:816px;">300</div><div class="a" style="left:1562px;top:813px;width:1px;height:18px;background:#c6c6c6;"></div><div class="t" style="right:3px;top:816px;">2118.90</div><div class="a" style="left:1px;top:832px;width:1678px;height:19px;background:#ffffff;"></div><div class="a" style="left:897px;top:831px;width:116px;height:19px;background:#64ec64;"></div><div class="t" style="left:2px;top:835px;">206272</div><div class="a" style="left:116px;top:832px;width:1px;height:18px;background:#c6c6c6;"></div><div class="t" style="left:116px;width:116px;text-align:center;top:835px;">gbpusd</div><div class="a" style="left:232px;top:832px;width:1px;height:18px;background:#c6c6c6;"></div><div class="t" style="left:232px;width:116px;text-align:center;top:835px;">buy</div><div class="a" style="left:348px;top:832px;width:1px;height:18px;background:#c6c6c6;"></div><div class="t" style="right:1218px;top:835px;">1.0</div><div class="a" style="left:464px;top:832px;width:1px;height:18px;background:#c6c6c6;"></div><div class="t" style="right:1017px;top:835px;">2006.07.26 23:59</div><div class="a" style="left:665px;top:832px;width:1px;height:18px;background:#c6c6c6;"></div><div class="t" style="right:901px;top:835px;">1.8544</div><div class="a" style="left:781px;top:832px;width:1px;height:18px;background:#c6c6c6;"></div><div class="t" style="right:785px;top:835px;">1.8244</div><div class="a" style="left:897px;top:832px;width:1px;height:18px;background:#c6c6c6;"></div><div class="t" style="right:669px;top:835px;">1.8844</div><div class="a" style="left:1013px;top:832px;width:1px;height:18px;background:#c6c6c6;"></div><div class="t" style="right:468px;top:835px;">2006.08.03 13:07</div><div class="a" style="left:1214px;top:832px;width:1px;height:18px;background:#c6c6c6;"></div><div class="t" style="right:352px;top:835px;">1.8844</div><div class="a" style="left:1330px;top:832px;width:1px;height:18px;background:#c6c6c6;"></div><div class="t" style="right:236px;top:835px;">15.75</div><div class="a" style="left:1446px;top:832px;width:1px;height:18px;background:#c6c6c6;"></div><div class="t" style="right:120px;top:835px;">300</div><div class="a" style="left:1562px;top:832px;width:1px;height:18px;background:#c6c6c6;"></div><div class="t" style="right:3px;top:835px;">2115.75</div><div class="a" style="left:1px;top:850px;width:1678px;height:20px;background:#d4d4d4;"></div><div class="a" style="left:1px;top:850px;width:1678px;height:1px;background:#c4c4c4;"></div><div class="a" style="left:1px;top:869px;width:1678px;height:1px;background:#c4c4c4;"></div><div class="t" style="left:5px;top:853px;font-weight:bold;">Profit/Loss: 18424.00 Deposit: 10000.00</div><div class="t" style="left:1678px;top:853px;font-weight:bold;transform:translateX(-100%);">28424.00</div><div class="a" style="left:0px;top:972px;width:1680px;height:1px;background:#808080;"></div><div class="a" style="left:0px;top:973px;width:1680px;height:1px;background:#b0b0b0;"></div><div class="a" style="left:0px;top:974px;width:1px;height:17px;background:#808080;"></div><svg style="left:0px;top:973px" width="400" height="19"><path d="M319 0 L372 0 L367 18 L322 18 Z" fill="#d4d0c8"/><path d="M319.5 0.5 L322.5 17.5 L367.5 17.5 L372.5 0.5" fill="none" stroke="#000" stroke-width="1.1"/><path d="M118 0 L229 0 L227 18 L121 18 Z" fill="#d4d0c8"/><path d="M118.5 0.5 L121.5 17.5 L227.5 17.5 L229.5 0.5" fill="none" stroke="#000" stroke-width="1.1"/><path d="M6 0 L120 0 L116 18 L11 18 Z" fill="#d4d0c8"/><path d="M6.5 0.5 L11.5 17.5 L116.5 17.5 L120.5 0.5" fill="none" stroke="#000" stroke-width="1.1"/><path d="M229 0 L322 0 L317 18 L233 18 Z" fill="#ffffff"/><path d="M229.5 0.5 L233.5 17.5 L317.5 17.5 L322.5 0.5" fill="none" stroke="#000" stroke-width="1.1"/></svg><div class="t" style="left:15px;top:975px;letter-spacing:-0.2px;">Open Positions</div><div class="t" style="left:93px;top:975px;">[ <span style="color:#1010d0">0</span> ]</div><div class="t" style="left:125px;top:975px;letter-spacing:-0.2px;">Pending Orders</div><div class="t" style="left:205px;top:975px;">[ <span style="color:#1010d0">0</span> ]</div><div class="t" style="left:237px;top:974px;letter-spacing:-0.1px;">Account History</div><div class="t" style="left:327px;top:975px;letter-spacing:-0.2px;">Journal</div><div class="a" style="left:0px;top:991px;width:1680px;height:1px;background:#ffffff;"></div><div class="a" style="left:1289px;top:994px;width:99px;height:1px;background:#808080;"></div><div class="a" style="left:1289px;top:994px;width:1px;height:18px;background:#808080;"></div><div class="a" style="left:1387px;top:994px;width:1px;height:18px;background:#ffffff;"></div><div class="a" style="left:1389px;top:994px;width:59px;height:1px;background:#808080;"></div><div class="a" style="left:1389px;top:994px;width:1px;height:18px;background:#808080;"></div><div class="a" style="left:1447px;top:994px;width:1px;height:18px;background:#ffffff;"></div><div class="a" style="left:1449px;top:994px;width:59px;height:1px;background:#808080;"></div><div class="a" style="left:1449px;top:994px;width:1px;height:18px;background:#808080;"></div><div class="a" style="left:1507px;top:994px;width:1px;height:18px;background:#ffffff;"></div><div class="a" style="left:1509px;top:994px;width:59px;height:1px;background:#808080;"></div><div class="a" style="left:1509px;top:994px;width:1px;height:18px;background:#808080;"></div><div class="a" style="left:1567px;top:994px;width:1px;height:18px;background:#ffffff;"></div><div class="a" style="left:1569px;top:994px;width:59px;height:1px;background:#808080;"></div><div class="a" style="left:1569px;top:994px;width:1px;height:18px;background:#808080;"></div><div class="a" style="left:1627px;top:994px;width:1px;height:18px;background:#ffffff;"></div><div class="a" style="left:1629px;top:994px;width:51px;height:1px;background:#808080;"></div><div class="a" style="left:1629px;top:994px;width:1px;height:18px;background:#808080;"></div><div class="a" style="left:1679px;top:994px;width:1px;height:18px;background:#ffffff;"></div></div></body></html>
